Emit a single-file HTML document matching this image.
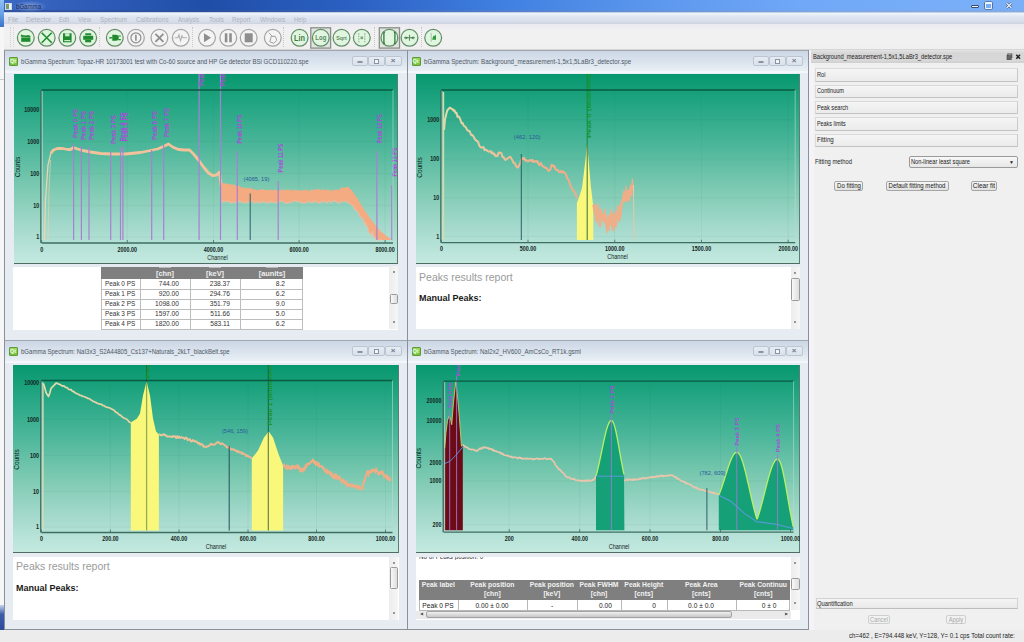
<!DOCTYPE html><html><head><meta charset="utf-8"><style>
html,body{margin:0;padding:0;}
body{width:1024px;height:642px;overflow:hidden;position:relative;background:#efefef;font-family:"Liberation Sans", sans-serif;}
div{box-sizing:border-box;}
</style></head><body><div style="position:absolute;left:0px;top:0px;width:4px;height:27px;background:linear-gradient(#8fc0f2,#6aa2e6 50%,#3a72c8);"></div><div style="position:absolute;left:4px;top:0px;width:1020px;height:13px;background:linear-gradient(to right,#3b68c2 0%,#2c5ab6 10%,#1f4ea8 20%,#2c62c4 35%,#4080e0 49%,#5c98ee 64%,#70a8f8 78%,#78aef8 92%,#7ab0f8 100%);"></div><div style="position:absolute;left:4px;top:10px;width:1020px;height:1.5px;background:linear-gradient(to right,#2e4c94,#30509a 20%,#5a80c8 50%,#80a4dc 80%,#86a8dc);opacity:0.7;"></div><div style="position:absolute;left:4px;top:11.5px;width:1020px;height:1.5px;background:#c2d0e8;"></div><div style="position:absolute;left:14px;top:1px;width:32px;height:11px;background:radial-gradient(ellipse at center,rgba(190,210,245,0.55),rgba(120,150,220,0) 75%);"></div><div style="position:absolute;left:4.5px;top:3px;width:7px;height:7px;background:linear-gradient(to right,#7a9a6a 50%,#eef2ea 50%);border:1px solid #cdd8e8;"></div><div style="position:absolute;left:16px;top:2.1px;font-size:7.5px;line-height:9.0px;color:#1c2a55;white-space:nowrap;transform:scaleX(0.811);transform-origin:left center;">bGamma</div><div style="position:absolute;left:971px;top:5px;width:7.5px;height:2.6px;background:#eef4fa;border:0.6px solid #3a4e70;border-radius:1px;"></div><div style="position:absolute;left:985.3px;top:1.6px;width:6.5px;height:7px;border:1.4px solid #eef4fa;border-top-width:2px;border-radius:1px;box-shadow:0 0 0 0.6px #3a4e70;"></div><svg style="position:absolute;left:1005px;top:2px" width="8" height="7" viewBox="0 0 8 7"><path d="M1.5 1L6.5 6M6.5 1L1.5 6" stroke="#3a4e70" stroke-width="2.4"/><path d="M1.5 1L6.5 6M6.5 1L1.5 6" stroke="#eef4fa" stroke-width="1.2"/></svg><div style="position:absolute;left:4px;top:13px;width:1020px;height:11px;background:linear-gradient(#eef5fc 0%,#dfe6f1 35%,#d7deeb 80%,#cdd2de 100%);"></div><div style="position:absolute;left:8.2px;top:15.0px;font-size:7.5px;line-height:9.0px;color:#aeb2bc;white-space:nowrap;transform:scaleX(0.852);transform-origin:left center;">File</div><div style="position:absolute;left:26px;top:15.0px;font-size:7.5px;line-height:9.0px;color:#aeb2bc;white-space:nowrap;transform:scaleX(0.893);transform-origin:left center;">Detector</div><div style="position:absolute;left:59px;top:15.0px;font-size:7.5px;line-height:9.0px;color:#aeb2bc;white-space:nowrap;transform:scaleX(0.774);transform-origin:left center;">Edit</div><div style="position:absolute;left:78px;top:15.0px;font-size:7.5px;line-height:9.0px;color:#aeb2bc;white-space:nowrap;transform:scaleX(0.806);transform-origin:left center;">View</div><div style="position:absolute;left:100px;top:15.0px;font-size:7.5px;line-height:9.0px;color:#aeb2bc;white-space:nowrap;transform:scaleX(0.841);transform-origin:left center;">Spectrum</div><div style="position:absolute;left:135.5px;top:15.0px;font-size:7.5px;line-height:9.0px;color:#aeb2bc;white-space:nowrap;transform:scaleX(0.821);transform-origin:left center;">Calibrations</div><div style="position:absolute;left:177.8px;top:15.0px;font-size:7.5px;line-height:9.0px;color:#aeb2bc;white-space:nowrap;transform:scaleX(0.759);transform-origin:left center;">Analysis</div><div style="position:absolute;left:208.5px;top:15.0px;font-size:7.5px;line-height:9.0px;color:#aeb2bc;white-space:nowrap;transform:scaleX(0.857);transform-origin:left center;">Tools</div><div style="position:absolute;left:232.3px;top:15.0px;font-size:7.5px;line-height:9.0px;color:#aeb2bc;white-space:nowrap;transform:scaleX(0.817);transform-origin:left center;">Report</div><div style="position:absolute;left:259.5px;top:15.0px;font-size:7.5px;line-height:9.0px;color:#aeb2bc;white-space:nowrap;transform:scaleX(0.838);transform-origin:left center;">Windows</div><div style="position:absolute;left:293.8px;top:15.0px;font-size:7.5px;line-height:9.0px;color:#aeb2bc;white-space:nowrap;transform:scaleX(0.791);transform-origin:left center;">Help</div><div style="position:absolute;left:4px;top:24px;width:1020px;height:25px;background:linear-gradient(#ebeaf0,#f1f0f2 25%,#f1f1f1 70%,#efefef);"></div><div style="position:absolute;left:4px;top:49px;width:1020px;height:1px;background:#d6d6d6;"></div><div style="position:absolute;left:10px;top:27px;width:1px;height:20px;border-left:1px dotted #d0d0d0;"></div><div style="position:absolute;left:12.5px;top:27px;width:1px;height:20px;border-left:1px dotted #d8d8d8;"></div><div style="position:absolute;left:99px;top:27px;width:1px;height:20px;border-left:1px dotted #c8c8c8;"></div><div style="position:absolute;left:192.3px;top:27px;width:1px;height:20px;border-left:1px dotted #c8c8c8;"></div><div style="position:absolute;left:283px;top:27px;width:1px;height:20px;border-left:1px dotted #c8c8c8;"></div><div style="position:absolute;left:374px;top:27px;width:1px;height:20px;border-left:1px dotted #c8c8c8;"></div><div style="position:absolute;left:421px;top:27px;width:1px;height:20px;border-left:1px dotted #c8c8c8;"></div><svg style="position:absolute;left:0;top:0" width="460" height="52" viewBox="0 0 460 52"><defs><radialGradient id="gfill" cx="0.5" cy="0.5" r="0.5"><stop offset="0" stop-color="#e4f7e4"/><stop offset="0.85" stop-color="#def5de"/><stop offset="1" stop-color="#eefaee"/></radialGradient></defs><rect x="310.8" y="27.8" width="19.8" height="20.3" fill="#dfe5df" stroke="#8a8f8a" stroke-width="1.3"/><rect x="379.3" y="27.8" width="20.2" height="20.3" fill="#dfe5df" stroke="#8a8f8a" stroke-width="1.3"/><circle cx="25.8" cy="37.8" r="8.4" fill="url(#gfill)" stroke="#638c66" stroke-width="1.25"/><path d="M21.0 34.599999999999994l2.5 0.6l2.5 0.3l2.2-0.4l2.4 0.9l-0.3 1.3l-9.5-0.6z" fill="#1f8a2e"/><path d="M21.200000000000003 37.4h9.2v4.4h-9.2z" fill="#1f8a2e"/><circle cx="46.7" cy="37.8" r="8.4" fill="url(#gfill)" stroke="#638c66" stroke-width="1.25"/><path d="M41.7 32.8L51.7 42.8M51.7 32.8L41.7 42.8" stroke="#1f8a2e" stroke-width="1.6"/><circle cx="67.3" cy="37.8" r="8.4" fill="url(#gfill)" stroke="#638c66" stroke-width="1.25"/><path d="M63.0 33.3h8.6v9h-8.6z" fill="#1f8a2e"/><rect x="65.1" y="33.3" width="4.4" height="3" fill="#cfeccf"/><rect x="64.3" y="40.0" width="6" height="1.2" fill="#cfeccf"/><circle cx="88.2" cy="37.8" r="8.4" fill="url(#gfill)" stroke="#638c66" stroke-width="1.25"/><rect x="85.2" y="33.3" width="6" height="2" fill="#1f8a2e"/><rect x="83.2" y="35.8" width="10" height="4" fill="#1f8a2e"/><rect x="85.2" y="39.8" width="6" height="2.5" fill="#1f8a2e"/><circle cx="114.8" cy="37.8" r="8.4" fill="url(#gfill)" stroke="#638c66" stroke-width="1.25"/><path d="M109.3 37.8h3" stroke="#1f8a2e" stroke-width="1.4"/><path d="M112.3 34.8h3.5a3 3 0 0 1 0 6h-3.5z" fill="#1f8a2e"/><path d="M118.3 36.0h2.5M118.3 39.599999999999994h2.5" stroke="#1f8a2e" stroke-width="1.2"/><circle cx="135.9" cy="37.8" r="8.4" fill="#f4f4f4" stroke="#a4a4a4" stroke-width="1.25"/><circle cx="135.9" cy="37.8" r="5" fill="none" stroke="#8e8e8e" stroke-width="1.2"/><path d="M135.9 34.8v6" stroke="#8e8e8e" stroke-width="1.6"/><circle cx="159.4" cy="37.8" r="8.4" fill="#f4f4f4" stroke="#a4a4a4" stroke-width="1.25"/><path d="M155.4 33.8L163.4 41.8M163.4 33.8L155.4 41.8" stroke="#8e8e8e" stroke-width="1.8"/><circle cx="180.8" cy="37.8" r="8.4" fill="#f4f4f4" stroke="#a4a4a4" stroke-width="1.25"/><path d="M174.8 37.8h3l1.2-3l1.5 6l1.5-5l1 2h3.8" fill="none" stroke="#b0b0b0" stroke-width="1.1"/><circle cx="207.0" cy="37.8" r="8.4" fill="#f4f4f4" stroke="#a4a4a4" stroke-width="1.25"/><path d="M204.0 33.3L211.0 37.8L204.0 42.3z" fill="#8e8e8e"/><circle cx="228.3" cy="37.8" r="8.4" fill="#f4f4f4" stroke="#a4a4a4" stroke-width="1.25"/><rect x="224.8" y="33.3" width="2.6" height="9" fill="#8e8e8e"/><rect x="229.20000000000002" y="33.3" width="2.6" height="9" fill="#8e8e8e"/><circle cx="248.7" cy="37.8" r="8.4" fill="#f4f4f4" stroke="#a4a4a4" stroke-width="1.25"/><rect x="244.7" y="33.3" width="8" height="9" fill="#8e8e8e"/><circle cx="272.8" cy="37.8" r="8.4" fill="#f4f4f4" stroke="#a4a4a4" stroke-width="1.25"/><path d="M268.8 32.8L272.8 36.8M271.3 36.3l4 0l1.5 4l-3 3l-4-1.5z" fill="none" stroke="#a0a0a0" stroke-width="1"/><circle cx="299.6" cy="37.8" r="8.4" fill="url(#gfill)" stroke="#638c66" stroke-width="1.25"/><text x="299.6" y="41.099999999999994" font-size="9" text-anchor="middle" fill="#437d48" font-family="Liberation Sans" font-weight="bold" textLength="11" lengthAdjust="spacingAndGlyphs">Lin</text><circle cx="320.8" cy="37.8" r="8.4" fill="url(#gfill)" stroke="#638c66" stroke-width="1.25"/><text x="320.8" y="40.4" font-size="8" text-anchor="middle" fill="#5a8a5e" font-family="Liberation Sans" font-weight="bold" textLength="11" lengthAdjust="spacingAndGlyphs">Log</text><circle cx="341.5" cy="37.8" r="8.4" fill="url(#gfill)" stroke="#638c66" stroke-width="1.25"/><text x="341.5" y="40.0" font-size="6" text-anchor="middle" fill="#5a8a5e" font-family="Liberation Sans" font-weight="bold" textLength="10.5" lengthAdjust="spacingAndGlyphs">Sqrt</text><circle cx="361.8" cy="37.8" r="8.4" fill="url(#gfill)" stroke="#638c66" stroke-width="1.25"/><path d="M358.8 33.3v9M364.8 33.3v9" stroke="#90b892" stroke-width="1.2" stroke-dasharray="1.5 1"/><rect x="360.5" y="36.5" width="2.6" height="2.6" fill="#7aa67c"/><circle cx="389.4" cy="37.8" r="8.4" fill="url(#gfill)" stroke="#638c66" stroke-width="1.25"/><path d="M384.9 32.3h-1v11h1M393.9 32.3h1v11h-1" fill="none" stroke="#2f7a3a" stroke-width="1.3"/><circle cx="409.5" cy="37.8" r="8.4" fill="url(#gfill)" stroke="#638c66" stroke-width="1.25"/><path d="M404.0 37.8h11M409.5 34.8v6" stroke="#5a8a5e" stroke-width="1.1"/><path d="M405.5 36.199999999999996l2.6 1.6l-2.6 1.6zM413.5 36.199999999999996l-2.6 1.6l2.6 1.6z" fill="#4a7a4e"/><circle cx="433.2" cy="37.8" r="8.4" fill="url(#gfill)" stroke="#638c66" stroke-width="1.25"/><path d="M431.2 32.8v9" stroke="#9ab89c" stroke-width="0.8"/><path d="M432.2 39.8l0.8-3l1-1.5l0.8 1l1.2-2v5.5z" fill="#2e9a3a"/></svg><div style="position:absolute;left:4px;top:50px;width:805px;height:580px;background:#8a9099;"></div><div style="position:absolute;left:4px;top:50px;width:404px;height:291px;background:#e6ecf2;border:1px solid #8a9099;border-top-color:#a0a6b0;border-radius:2px 2px 0 0;"></div><div style="position:absolute;left:5px;top:51px;width:402px;height:20px;background:linear-gradient(#ccd7e5,#dfe7f0 70%,#eaf0f5);"></div><div style="position:absolute;left:5px;top:71px;width:402px;height:2px;background:#f3f6fa;"></div><div style="position:absolute;left:9.3px;top:56.8px;width:9px;height:9.6px;background:linear-gradient(#9ad860,#78c040);border:1px solid #5f9a38;border-radius:1px;"></div><div style="position:absolute;left:10px;top:58.2px;font-size:5.5px;line-height:6.6px;color:#e8ffe0;white-space:nowrap;font-weight:bold;">Qt</div><div style="position:absolute;left:21px;top:58.4px;font-size:7.3px;line-height:8.8px;color:#4f5966;white-space:nowrap;transform:scaleX(0.835);transform-origin:left center;">bGamma Spectrum: Topaz-HR 10173001 test with Co-60 source and HP Ge detector BSi GCD110220.spe</div><div style="position:absolute;left:351.5px;top:56px;width:16.4px;height:10.2px;background:linear-gradient(#e6ecf3,#d9e1eb);border:1px solid #bcc6d2;border-radius:2px;"></div><div style="position:absolute;left:367.9px;top:56px;width:16.7px;height:10.2px;background:linear-gradient(#e6ecf3,#d9e1eb);border:1px solid #bcc6d2;border-radius:2px;"></div><div style="position:absolute;left:384.59999999999997px;top:56px;width:17.5px;height:10.2px;background:linear-gradient(#e6ecf3,#d9e1eb);border:1px solid #bcc6d2;border-radius:2px;"></div><div style="position:absolute;left:357px;top:61px;width:6px;height:2.2px;background:#f4f6f8;border:1px solid #8a95a2;border-radius:1px;"></div><div style="position:absolute;left:373.5px;top:59px;width:5.5px;height:4.5px;background:#f4f6f8;border:1px solid #8a95a2;border-top-width:1.6px;"></div><div style="position:absolute;left:393.2px;top:56.4px;font-size:8px;line-height:9.6px;color:#6f7a88;white-space:nowrap;font-weight:bold;transform:translateX(-50%) ;transform-origin:center center;">&#215;</div><div style="position:absolute;left:406.5px;top:50px;width:402.5px;height:291px;background:#e6ecf2;border:1px solid #8a9099;border-top-color:#a0a6b0;border-radius:2px 2px 0 0;"></div><div style="position:absolute;left:407.5px;top:51px;width:400.5px;height:20px;background:linear-gradient(#ccd7e5,#dfe7f0 70%,#eaf0f5);"></div><div style="position:absolute;left:407.5px;top:71px;width:400.5px;height:2px;background:#f3f6fa;"></div><div style="position:absolute;left:411.8px;top:56.8px;width:9px;height:9.6px;background:linear-gradient(#9ad860,#78c040);border:1px solid #5f9a38;border-radius:1px;"></div><div style="position:absolute;left:412.5px;top:58.2px;font-size:5.5px;line-height:6.6px;color:#e8ffe0;white-space:nowrap;font-weight:bold;">Qt</div><div style="position:absolute;left:423.5px;top:58.4px;font-size:7.3px;line-height:8.8px;color:#4f5966;white-space:nowrap;transform:scaleX(0.847);transform-origin:left center;">bGamma Spectrum: Background_measurement-1,5x1,5LaBr3_detector.spe</div><div style="position:absolute;left:752.5px;top:56px;width:16.4px;height:10.2px;background:linear-gradient(#e6ecf3,#d9e1eb);border:1px solid #bcc6d2;border-radius:2px;"></div><div style="position:absolute;left:768.9px;top:56px;width:16.7px;height:10.2px;background:linear-gradient(#e6ecf3,#d9e1eb);border:1px solid #bcc6d2;border-radius:2px;"></div><div style="position:absolute;left:785.6px;top:56px;width:17.5px;height:10.2px;background:linear-gradient(#e6ecf3,#d9e1eb);border:1px solid #bcc6d2;border-radius:2px;"></div><div style="position:absolute;left:758.0px;top:61px;width:6px;height:2.2px;background:#f4f6f8;border:1px solid #8a95a2;border-radius:1px;"></div><div style="position:absolute;left:774.5px;top:59px;width:5.5px;height:4.5px;background:#f4f6f8;border:1px solid #8a95a2;border-top-width:1.6px;"></div><div style="position:absolute;left:794.2px;top:56.4px;font-size:8px;line-height:9.6px;color:#6f7a88;white-space:nowrap;font-weight:bold;transform:translateX(-50%) ;transform-origin:center center;">&#215;</div><div style="position:absolute;left:4px;top:340px;width:404px;height:290px;background:#e6ecf2;border:1px solid #8a9099;border-top-color:#a0a6b0;border-radius:2px 2px 0 0;"></div><div style="position:absolute;left:5px;top:341px;width:402px;height:20px;background:linear-gradient(#ccd7e5,#dfe7f0 70%,#eaf0f5);"></div><div style="position:absolute;left:5px;top:361px;width:402px;height:2px;background:#f3f6fa;"></div><div style="position:absolute;left:9.3px;top:346.8px;width:9px;height:9.6px;background:linear-gradient(#9ad860,#78c040);border:1px solid #5f9a38;border-radius:1px;"></div><div style="position:absolute;left:10px;top:348.2px;font-size:5.5px;line-height:6.6px;color:#e8ffe0;white-space:nowrap;font-weight:bold;">Qt</div><div style="position:absolute;left:21px;top:348.4px;font-size:7.3px;line-height:8.8px;color:#4f5966;white-space:nowrap;transform:scaleX(0.827);transform-origin:left center;">bGamma Spectrum: NaI3x3_S2A44805_Cs137+Naturals_2kLT_blackBelt.spe</div><div style="position:absolute;left:351.5px;top:346px;width:16.4px;height:10.2px;background:linear-gradient(#e6ecf3,#d9e1eb);border:1px solid #bcc6d2;border-radius:2px;"></div><div style="position:absolute;left:367.9px;top:346px;width:16.7px;height:10.2px;background:linear-gradient(#e6ecf3,#d9e1eb);border:1px solid #bcc6d2;border-radius:2px;"></div><div style="position:absolute;left:384.59999999999997px;top:346px;width:17.5px;height:10.2px;background:linear-gradient(#e6ecf3,#d9e1eb);border:1px solid #bcc6d2;border-radius:2px;"></div><div style="position:absolute;left:357px;top:351px;width:6px;height:2.2px;background:#f4f6f8;border:1px solid #8a95a2;border-radius:1px;"></div><div style="position:absolute;left:373.5px;top:349px;width:5.5px;height:4.5px;background:#f4f6f8;border:1px solid #8a95a2;border-top-width:1.6px;"></div><div style="position:absolute;left:393.2px;top:346.4px;font-size:8px;line-height:9.6px;color:#6f7a88;white-space:nowrap;font-weight:bold;transform:translateX(-50%) ;transform-origin:center center;">&#215;</div><div style="position:absolute;left:406.5px;top:340px;width:402.5px;height:290px;background:#e6ecf2;border:1px solid #8a9099;border-top-color:#a0a6b0;border-radius:2px 2px 0 0;"></div><div style="position:absolute;left:407.5px;top:341px;width:400.5px;height:20px;background:linear-gradient(#ccd7e5,#dfe7f0 70%,#eaf0f5);"></div><div style="position:absolute;left:407.5px;top:361px;width:400.5px;height:2px;background:#f3f6fa;"></div><div style="position:absolute;left:411.8px;top:346.8px;width:9px;height:9.6px;background:linear-gradient(#9ad860,#78c040);border:1px solid #5f9a38;border-radius:1px;"></div><div style="position:absolute;left:412.5px;top:348.2px;font-size:5.5px;line-height:6.6px;color:#e8ffe0;white-space:nowrap;font-weight:bold;">Qt</div><div style="position:absolute;left:423.5px;top:348.4px;font-size:7.3px;line-height:8.8px;color:#4f5966;white-space:nowrap;transform:scaleX(0.831);transform-origin:left center;">bGamma Spectrum: NaI2x2_HV600_AmCsCo_RT1k.gsml</div><div style="position:absolute;left:752.5px;top:346px;width:16.4px;height:10.2px;background:linear-gradient(#e6ecf3,#d9e1eb);border:1px solid #bcc6d2;border-radius:2px;"></div><div style="position:absolute;left:768.9px;top:346px;width:16.7px;height:10.2px;background:linear-gradient(#e6ecf3,#d9e1eb);border:1px solid #bcc6d2;border-radius:2px;"></div><div style="position:absolute;left:785.6px;top:346px;width:17.5px;height:10.2px;background:linear-gradient(#e6ecf3,#d9e1eb);border:1px solid #bcc6d2;border-radius:2px;"></div><div style="position:absolute;left:758.0px;top:351px;width:6px;height:2.2px;background:#f4f6f8;border:1px solid #8a95a2;border-radius:1px;"></div><div style="position:absolute;left:774.5px;top:349px;width:5.5px;height:4.5px;background:#f4f6f8;border:1px solid #8a95a2;border-top-width:1.6px;"></div><div style="position:absolute;left:794.2px;top:346.4px;font-size:8px;line-height:9.6px;color:#6f7a88;white-space:nowrap;font-weight:bold;transform:translateX(-50%) ;transform-origin:center center;">&#215;</div><div style="position:absolute;left:13.5px;top:74px;width:384.5px;height:190px;background:linear-gradient(#07986f 0%,#0c9a72 3%,#28a886 19%,#50b89c 40%,#7ecab2 61%,#a6dacd 82%,#bee6dc 96%,#c4e9df 100%);border-right:1px solid #5d7d72;border-bottom:1.5px solid #4f6c63;"></div><svg style="position:absolute;left:13.5px;top:74px" width="384.5" height="190" viewBox="13.5 74 384.5 190" font-family="Liberation Sans"><line x1="41" y1="141.3" x2="392.5" y2="141.3" stroke="#1f6a50" stroke-opacity="0.11" stroke-width="0.6"/><line x1="41" y1="173.5" x2="392.5" y2="173.5" stroke="#1f6a50" stroke-opacity="0.11" stroke-width="0.6"/><line x1="41" y1="205.3" x2="392.5" y2="205.3" stroke="#1f6a50" stroke-opacity="0.11" stroke-width="0.6"/><line x1="41" y1="237" x2="392.5" y2="237" stroke="#1f6a50" stroke-opacity="0.11" stroke-width="0.6"/><line x1="126.8" y1="90" x2="126.8" y2="243" stroke="#1f6a50" stroke-opacity="0.11" stroke-width="0.6"/><line x1="213" y1="90" x2="213" y2="243" stroke="#1f6a50" stroke-opacity="0.11" stroke-width="0.6"/><line x1="298.6" y1="90" x2="298.6" y2="243" stroke="#1f6a50" stroke-opacity="0.11" stroke-width="0.6"/><line x1="384.6" y1="90" x2="384.6" y2="243" stroke="#1f6a50" stroke-opacity="0.11" stroke-width="0.6"/><path d="M44.0 240.0 L45.0 200.0 L47.5 165.0 L50.3 153.3" fill="none" stroke="#e9d6ae" stroke-width="1.3" stroke-linejoin="round" /><path d="M47.5 240.0 L48.5 190.0 L50.0 160.0" fill="none" stroke="#e4d2b0" stroke-width="1.0" stroke-linejoin="round" stroke-opacity="0.7"/><path d="M50.3 153.3 L53.0 150.0 L57.0 148.5 L62.0 148.5 L67.0 149.5 L70.0 149.5 L73.0 147.5 L77.0 149.0 L82.0 150.5 L90.0 152.0 L100.0 153.5 L110.0 154.0 L125.0 154.0 L140.0 152.5 L150.0 150.5 L157.0 149.0 L163.0 146.5 L168.0 144.0 L172.0 147.0 L178.0 149.5 L184.0 150.0 L189.0 150.0 L193.0 154.0 L198.0 160.0 L203.0 167.0 L208.0 173.0 L212.0 175.5 L216.0 175.0 L219.0 172.0 L220.5 186.0" fill="none" stroke="#f3c29a" stroke-width="2.8" stroke-linejoin="round" /><path d="M220.5 184.0 L221.0 182.6 L222.2 182.5 L223.4 183.8 L224.6 182.9 L225.8 184.0 L227.0 183.9 L228.2 183.6 L229.4 184.7 L230.6 184.0 L231.8 185.0 L233.0 184.5 L234.2 184.8 L235.4 185.7 L236.6 186.8 L237.8 185.6 L239.0 186.0 L240.2 187.1 L241.4 188.0 L242.6 187.5 L243.8 187.4 L245.0 188.8 L246.2 187.1 L247.4 189.0 L248.6 188.1 L249.8 188.0 L251.0 188.2 L252.2 188.9 L253.4 190.1 L254.6 189.1 L255.8 190.1 L257.0 190.3 L258.2 189.7 L259.4 190.1 L260.6 189.1 L261.8 189.1 L263.0 189.4 L264.2 190.4 L265.4 189.9 L266.6 189.6 L267.8 190.2 L269.0 189.9 L270.2 189.6 L271.4 190.6 L272.6 190.4 L273.8 189.5 L275.0 190.1 L276.2 190.1 L277.4 190.8 L278.6 190.5 L279.8 189.6 L281.0 191.0 L282.2 189.2 L283.4 189.8 L284.6 190.5 L285.8 189.3 L287.0 190.0 L288.2 189.1 L289.4 190.3 L290.6 190.5 L291.8 190.1 L293.0 190.8 L294.2 189.6 L295.4 190.4 L296.6 190.2 L297.8 190.2 L299.0 189.9 L300.2 190.7 L301.4 190.9 L302.6 189.9 L303.8 190.3 L305.0 189.1 L306.2 190.4 L307.4 190.3 L308.6 191.0 L309.8 190.6 L311.0 189.6 L312.2 189.8 L313.4 190.3 L314.6 189.0 L315.8 189.9 L317.0 189.3 L318.2 189.2 L319.4 189.1 L320.6 190.5 L321.8 189.3 L323.0 189.5 L324.2 189.8 L325.4 190.7 L326.6 189.2 L327.8 189.9 L329.0 190.1 L330.2 190.8 L331.4 190.6 L332.6 190.7 L333.8 189.6 L335.0 189.8 L336.2 189.4 L337.4 190.2 L338.6 190.0 L339.8 188.1 L341.0 187.9 L342.2 187.7 L343.4 187.4 L344.6 187.6 L345.8 187.5 L347.0 186.5 L347.0 186.5 L351.0 190.0 L356.0 197.0 L362.0 207.0 L368.0 216.0 L374.0 224.0 L380.0 231.0 L386.0 236.0 L390.0 239.0 L392.0 240.0 L382.0 240.0 L381.0 240.0 L380.0 240.0 L379.0 240.0 L378.0 240.0 L377.0 240.0 L376.0 240.0 L375.0 238.2 L374.0 237.6 L373.0 236.7 L372.0 231.1 L371.0 235.7 L370.0 233.6 L369.0 232.9 L368.0 231.1 L367.0 226.9 L366.0 225.7 L365.0 222.3 L364.0 224.7 L363.0 219.4 L362.0 218.2 L361.0 217.9 L360.0 216.2 L359.0 216.2 L358.0 212.9 L357.0 211.2 L356.0 211.0 L355.0 209.3 L354.0 209.8 L353.0 206.2 L348.0 202.9 L346.8 202.3 L345.6 201.2 L344.4 201.4 L343.2 201.6 L342.0 201.7 L340.8 201.1 L339.6 202.8 L338.4 203.2 L337.2 201.9 L336.0 202.0 L334.8 201.0 L333.6 201.0 L332.4 201.6 L331.2 201.4 L330.0 202.8 L328.8 201.2 L327.6 200.9 L326.4 203.1 L325.2 202.1 L324.0 201.2 L322.8 202.1 L321.6 200.9 L320.4 202.1 L319.2 203.1 L318.0 202.9 L316.8 202.5 L315.6 201.4 L314.4 201.7 L313.2 201.2 L312.0 202.7 L310.8 202.1 L309.6 202.7 L308.4 201.6 L307.2 201.3 L306.0 202.7 L304.8 203.2 L303.6 202.8 L302.4 202.7 L301.2 202.8 L300.0 202.6 L298.8 201.3 L297.6 202.0 L296.4 201.7 L295.2 200.9 L294.0 200.9 L292.8 201.5 L291.6 201.4 L290.4 202.5 L289.2 203.1 L288.0 201.9 L286.8 203.0 L285.6 203.2 L284.4 203.1 L283.2 201.7 L282.0 201.3 L280.8 201.3 L279.6 201.3 L278.4 201.3 L277.2 202.3 L276.0 203.0 L274.8 202.8 L273.6 202.0 L272.4 202.4 L271.2 202.7 L270.0 201.0 L268.8 202.4 L267.6 203.0 L266.4 202.7 L265.2 202.6 L264.0 201.9 L262.8 201.2 L261.6 202.7 L260.4 201.6 L259.2 202.7 L258.0 203.1 L256.8 201.8 L255.6 201.8 L254.4 203.1 L253.2 202.5 L252.0 201.2 L250.8 201.1 L249.6 201.2 L248.4 203.0 L247.2 202.7 L246.0 201.2 L244.8 202.8 L243.6 203.2 L242.4 202.4 L241.2 201.6 L240.0 202.1 L238.8 201.1 L237.6 200.8 L236.4 203.1 L235.2 202.4 L234.0 202.1 L232.8 203.0 L231.6 201.8 L230.4 202.9 L229.2 202.8 L228.0 201.3 L226.8 201.4 L225.6 201.5 L224.4 201.4 L223.2 202.2 L222.0 201.4 L221.0 200.0Z" fill="#f5ab82" /><path d="M381.0 240.0 L380.0 240.0 L379.0 240.0 L378.0 240.0 L377.0 240.0 L376.0 240.0 L375.0 238.2 L374.0 237.6 L373.0 236.7 L372.0 231.1 L371.0 235.7 L370.0 233.6 L369.0 232.9 L368.0 231.1 L367.0 226.9 L366.0 225.7 L365.0 222.3 L364.0 224.7 L363.0 219.4 L362.0 218.2 L361.0 217.9 L360.0 216.2 L359.0 216.2 L358.0 212.9 L357.0 211.2 L356.0 211.0 L355.0 209.3 L354.0 209.8 L353.0 206.2 L348.0 202.9 L346.8 202.3 L345.6 201.2 L344.4 201.4 L343.2 201.6 L342.0 201.7 L340.8 201.1 L339.6 202.8 L338.4 203.2 L337.2 201.9 L336.0 202.0 L334.8 201.0 L333.6 201.0 L332.4 201.6 L331.2 201.4 L330.0 202.8 L328.8 201.2 L327.6 200.9 L326.4 203.1 L325.2 202.1 L324.0 201.2 L322.8 202.1 L321.6 200.9 L320.4 202.1 L319.2 203.1 L318.0 202.9 L316.8 202.5 L315.6 201.4 L314.4 201.7 L313.2 201.2 L312.0 202.7 L310.8 202.1 L309.6 202.7 L308.4 201.6 L307.2 201.3 L306.0 202.7 L304.8 203.2 L303.6 202.8 L302.4 202.7 L301.2 202.8 L300.0 202.6 L298.8 201.3 L297.6 202.0 L296.4 201.7 L295.2 200.9 L294.0 200.9 L292.8 201.5 L291.6 201.4 L290.4 202.5 L289.2 203.1 L288.0 201.9 L286.8 203.0 L285.6 203.2 L284.4 203.1 L283.2 201.7 L282.0 201.3 L280.8 201.3 L279.6 201.3 L278.4 201.3 L277.2 202.3 L276.0 203.0 L274.8 202.8 L273.6 202.0 L272.4 202.4 L271.2 202.7 L270.0 201.0 L268.8 202.4 L267.6 203.0 L266.4 202.7 L265.2 202.6 L264.0 201.9 L262.8 201.2 L261.6 202.7 L260.4 201.6 L259.2 202.7 L258.0 203.1 L256.8 201.8 L255.6 201.8 L254.4 203.1 L253.2 202.5 L252.0 201.2 L250.8 201.1 L249.6 201.2 L248.4 203.0 L247.2 202.7 L246.0 201.2 L244.8 202.8 L243.6 203.2 L242.4 202.4 L241.2 201.6 L240.0 202.1 L238.8 201.1 L237.6 200.8 L236.4 203.1 L235.2 202.4 L234.0 202.1 L232.8 203.0 L231.6 201.8 L230.4 202.9 L229.2 202.8 L228.0 201.3 L226.8 201.4 L225.6 201.5 L224.4 201.4 L223.2 202.2 L222.0 201.4 L221.0 200.0" fill="none" stroke="#f0c0a4" stroke-width="1.4" stroke-linejoin="round" stroke-opacity="0.55"/><line x1="73.1" y1="144" x2="73.1" y2="240" stroke="#a880d2" stroke-width="1.2"/><line x1="80.9" y1="146" x2="80.9" y2="240" stroke="#a880d2" stroke-width="1.2"/><line x1="88.5" y1="147" x2="88.5" y2="240" stroke="#a880d2" stroke-width="1.2"/><line x1="110.2" y1="152" x2="110.2" y2="240" stroke="#a880d2" stroke-width="1.2"/><line x1="120" y1="147" x2="120" y2="240" stroke="#a880d2" stroke-width="1.2"/><line x1="122.4" y1="147" x2="122.4" y2="240" stroke="#a880d2" stroke-width="1.2"/><line x1="151.2" y1="150" x2="151.2" y2="240" stroke="#a880d2" stroke-width="1.2"/><line x1="163.2" y1="145" x2="163.2" y2="240" stroke="#a880d2" stroke-width="1.2"/><line x1="198.6" y1="74" x2="198.6" y2="240" stroke="#a880d2" stroke-width="1.2"/><line x1="220" y1="74" x2="220" y2="240" stroke="#a880d2" stroke-width="1.2"/><line x1="236.8" y1="151" x2="236.8" y2="240" stroke="#a880d2" stroke-width="1.2"/><line x1="277.7" y1="181" x2="277.7" y2="240" stroke="#a880d2" stroke-width="1.2"/><line x1="376.4" y1="151" x2="376.4" y2="240" stroke="#a880d2" stroke-width="1.2"/><line x1="391.3" y1="185" x2="391.3" y2="240" stroke="#a880d2" stroke-width="1.2"/><text x="0" y="0" transform="translate(77.89999999999999 123.5) rotate(-90)" font-size="6.6" font-weight="bold" text-anchor="middle" fill="#a84ddc" textLength="29" lengthAdjust="spacingAndGlyphs">Peak 0 PS</text><text x="0" y="0" transform="translate(85.7 125.5) rotate(-90)" font-size="6.6" font-weight="bold" text-anchor="middle" fill="#a84ddc" textLength="29" lengthAdjust="spacingAndGlyphs">Peak 1 PS</text><text x="0" y="0" transform="translate(93.3 125.5) rotate(-90)" font-size="6.6" font-weight="bold" text-anchor="middle" fill="#a84ddc" textLength="29" lengthAdjust="spacingAndGlyphs">Peak 2 PS</text><text x="0" y="0" transform="translate(115.0 129.6) rotate(-90)" font-size="6.6" font-weight="bold" text-anchor="middle" fill="#a84ddc" textLength="29" lengthAdjust="spacingAndGlyphs">Peak 3 PS</text><text x="0" y="0" transform="translate(124.8 127) rotate(-90)" font-size="6.6" font-weight="bold" text-anchor="middle" fill="#a84ddc" textLength="29" lengthAdjust="spacingAndGlyphs">Peak 4 PS</text><text x="0" y="0" transform="translate(127.2 127) rotate(-90)" font-size="6.6" font-weight="bold" text-anchor="middle" fill="#a84ddc" textLength="29" lengthAdjust="spacingAndGlyphs">Peak 5 PS</text><text x="0" y="0" transform="translate(156.0 125.5) rotate(-90)" font-size="6.6" font-weight="bold" text-anchor="middle" fill="#a84ddc" textLength="29" lengthAdjust="spacingAndGlyphs">Peak 6 PS</text><text x="0" y="0" transform="translate(168.0 122.5) rotate(-90)" font-size="6.6" font-weight="bold" text-anchor="middle" fill="#a84ddc" textLength="29" lengthAdjust="spacingAndGlyphs">Peak 7 PS</text><text x="0" y="0" transform="translate(241.60000000000002 129) rotate(-90)" font-size="6.6" font-weight="bold" text-anchor="middle" fill="#a84ddc" textLength="29" lengthAdjust="spacingAndGlyphs">Peak 10 PS</text><text x="0" y="0" transform="translate(282.5 158) rotate(-90)" font-size="6.6" font-weight="bold" text-anchor="middle" fill="#a84ddc" textLength="29" lengthAdjust="spacingAndGlyphs">Peak 11 PS</text><text x="0" y="0" transform="translate(381.2 128.5) rotate(-90)" font-size="6.6" font-weight="bold" text-anchor="middle" fill="#a84ddc" textLength="29" lengthAdjust="spacingAndGlyphs">Peak 12 PS</text><text x="0" y="0" transform="translate(396.1 162) rotate(-90)" font-size="6.6" font-weight="bold" text-anchor="middle" fill="#a84ddc" textLength="29" lengthAdjust="spacingAndGlyphs">Peak 13 PS</text><text x="0" y="0" transform="translate(203.4 86) rotate(-90)" font-size="6.6" font-weight="bold" text-anchor="start" fill="#a84ddc" textLength="29" lengthAdjust="spacingAndGlyphs">Peak 8 PS</text><text x="0" y="0" transform="translate(224.8 86.5) rotate(-90)" font-size="6.6" font-weight="bold" text-anchor="start" fill="#a84ddc" textLength="29" lengthAdjust="spacingAndGlyphs">Peak 9 PS</text><line x1="249.7" y1="193.4" x2="249.7" y2="240" stroke="#2a5f6a" stroke-width="1"/><text x="255.9" y="181" font-size="6.2" text-anchor="middle" fill="#2a5a9a" textLength="25.8" lengthAdjust="spacingAndGlyphs">(4065, 19)</text><line x1="41" y1="90" x2="392.5" y2="90" stroke="#0a5a40" stroke-width="1.3"/><line x1="392.5" y1="90" x2="392.5" y2="243" stroke="#b8dccd" stroke-opacity="0.6" stroke-width="1"/><line x1="40.4" y1="90" x2="40.4" y2="243" stroke="#3f6d60" stroke-width="1.4"/><line x1="41.8" y1="91" x2="41.8" y2="243" stroke="#cfe6dc" stroke-opacity="0.55" stroke-width="1.2"/><line x1="41" y1="243" x2="392.5" y2="243" stroke="#3f6d60" stroke-width="1.3"/><text x="38.7" y="112.3" font-size="6.4" font-weight="bold" text-anchor="end" fill="#13261f" textLength="14.9" lengthAdjust="spacingAndGlyphs">10000</text><text x="38.7" y="143.60000000000002" font-size="6.4" font-weight="bold" text-anchor="end" fill="#13261f" textLength="12.0" lengthAdjust="spacingAndGlyphs">1000</text><text x="38.7" y="175.8" font-size="6.4" font-weight="bold" text-anchor="end" fill="#13261f" textLength="9.0" lengthAdjust="spacingAndGlyphs">100</text><text x="38.7" y="207.60000000000002" font-size="6.4" font-weight="bold" text-anchor="end" fill="#13261f" textLength="6.0" lengthAdjust="spacingAndGlyphs">10</text><text x="38.7" y="239.3" font-size="6.4" font-weight="bold" text-anchor="end" fill="#13261f" textLength="3.0" lengthAdjust="spacingAndGlyphs">1</text><line x1="41.2" y1="243" x2="41.2" y2="240" stroke="#3f6d60" stroke-width="0.8"/><text x="41.2" y="251.6" font-size="6.4" font-weight="bold" text-anchor="middle" fill="#13261f" textLength="3.0" lengthAdjust="spacingAndGlyphs">0</text><line x1="126.8" y1="243" x2="126.8" y2="240" stroke="#3f6d60" stroke-width="0.8"/><text x="126.8" y="251.6" font-size="6.4" font-weight="bold" text-anchor="middle" fill="#13261f" textLength="19.4" lengthAdjust="spacingAndGlyphs">2000.00</text><line x1="213" y1="243" x2="213" y2="240" stroke="#3f6d60" stroke-width="0.8"/><text x="213" y="251.6" font-size="6.4" font-weight="bold" text-anchor="middle" fill="#13261f" textLength="19.4" lengthAdjust="spacingAndGlyphs">4000.00</text><line x1="298.6" y1="243" x2="298.6" y2="240" stroke="#3f6d60" stroke-width="0.8"/><text x="298.6" y="251.6" font-size="6.4" font-weight="bold" text-anchor="middle" fill="#13261f" textLength="19.4" lengthAdjust="spacingAndGlyphs">6000.00</text><line x1="384.6" y1="243" x2="384.6" y2="240" stroke="#3f6d60" stroke-width="0.8"/><text x="384.6" y="251.6" font-size="6.4" font-weight="bold" text-anchor="middle" fill="#13261f" textLength="19.4" lengthAdjust="spacingAndGlyphs">8000.00</text><text x="217" y="259.6" font-size="6.4" text-anchor="middle" fill="#13261f" textLength="20.5" lengthAdjust="spacingAndGlyphs">Channel</text><text x="0" y="0" transform="translate(19 167) rotate(-90)" font-size="6.4" text-anchor="middle" fill="#13261f" textLength="20.5" lengthAdjust="spacingAndGlyphs">Counts</text></svg><div style="position:absolute;left:415.5px;top:74px;width:384.5px;height:190px;background:linear-gradient(#07986f 0%,#0c9a72 3%,#28a886 19%,#50b89c 40%,#7ecab2 61%,#a6dacd 82%,#bee6dc 96%,#c4e9df 100%);border-right:1px solid #5d7d72;border-bottom:1.5px solid #4f6c63;"></div><svg style="position:absolute;left:415.5px;top:74px" width="384.5" height="190" viewBox="415.5 74 384.5 190" font-family="Liberation Sans"><line x1="441" y1="119.7" x2="794.7" y2="119.7" stroke="#1f6a50" stroke-opacity="0.11" stroke-width="0.6"/><line x1="441" y1="158.9" x2="794.7" y2="158.9" stroke="#1f6a50" stroke-opacity="0.11" stroke-width="0.6"/><line x1="441" y1="197.8" x2="794.7" y2="197.8" stroke="#1f6a50" stroke-opacity="0.11" stroke-width="0.6"/><line x1="441" y1="236.4" x2="794.7" y2="236.4" stroke="#1f6a50" stroke-opacity="0.11" stroke-width="0.6"/><line x1="527.5" y1="90" x2="527.5" y2="242.7" stroke="#1f6a50" stroke-opacity="0.11" stroke-width="0.6"/><line x1="614.3" y1="90" x2="614.3" y2="242.7" stroke="#1f6a50" stroke-opacity="0.11" stroke-width="0.6"/><line x1="701" y1="90" x2="701" y2="242.7" stroke="#1f6a50" stroke-opacity="0.11" stroke-width="0.6"/><line x1="787.7" y1="90" x2="787.7" y2="242.7" stroke="#1f6a50" stroke-opacity="0.11" stroke-width="0.6"/><line x1="443" y1="92" x2="443" y2="240" stroke="#d2dca8" stroke-width="1.4"/><defs><linearGradient id="trg" gradientUnits="userSpaceOnUse" x1="443" y1="0" x2="600" y2="0"><stop offset="0" stop-color="#e4d8a8"/><stop offset="0.3" stop-color="#ecc49c"/><stop offset="0.6" stop-color="#f0b08c"/><stop offset="1" stop-color="#f2a888"/></linearGradient></defs><path d="M443.5 130.0 L444.5 119.7 L445.8 114.0 L447.0 110.0 L448.0 109.0 L449.0 107.8 L450.0 107.8 L451.0 108.9 L452.0 109.0 L453.0 110.7 L454.0 110.3 L455.0 113.0 L456.0 112.8 L457.0 116.9 L458.0 116.4 L459.0 117.7 L460.0 120.0 L461.1 123.2 L462.2 123.1 L463.3 125.8 L464.4 126.3 L465.6 127.8 L466.8 129.9 L468.0 131.0 L469.0 130.9 L470.0 133.4 L471.0 135.2 L472.0 135.0 L473.1 136.6 L474.1 138.8 L475.2 140.0 L476.3 141.0 L477.5 141.6 L478.8 145.8 L480.0 147.0 L481.0 147.8 L482.0 147.4 L483.0 147.0 L484.0 150.2 L485.0 149.4 L486.0 150.0 L487.0 151.0 L488.0 151.7 L489.0 151.4 L490.0 151.0 L491.0 153.1 L492.0 152.2 L493.0 154.2 L494.0 153.8 L495.0 156.1 L496.0 155.5 L497.0 156.1 L498.0 153.0 L499.0 152.5 L500.0 153.0 L501.0 153.5 L502.0 157.3 L503.0 157.0 L504.0 159.0 L505.0 160.0 L506.0 158.8 L507.0 158.8 L508.0 157.8 L509.0 157.1 L510.0 157.0 L511.0 158.8 L512.0 160.3 L513.0 162.8 L514.0 163.0 L515.1 165.0 L516.3 167.3 L517.4 167.4 L518.7 165.4 L520.0 162.7 L521.3 158.0 L522.5 159.0 L523.6 157.9 L524.8 160.7 L526.0 160.0 L527.0 161.5 L528.0 161.3 L529.0 160.2 L530.0 160.0 L531.0 161.0 L532.0 159.7 L533.0 162.1 L534.0 161.6 L535.0 161.0 L536.0 162.0 L537.0 161.1 L538.1 164.2 L539.1 165.2 L540.2 162.8 L541.2 164.7 L542.5 166.8 L543.7 166.6 L545.0 168.0 L546.0 167.9 L547.0 169.3 L548.0 171.0 L549.0 170.4 L550.0 169.2 L551.0 165.0 L552.0 165.0 L553.0 166.6 L554.0 166.0 L555.0 169.4 L556.0 170.0 L557.1 169.7 L558.1 171.7 L559.2 172.2 L560.3 170.9 L561.3 172.7 L562.4 171.3 L563.6 172.3 L564.8 173.1 L566.0 176.0 L567.0 178.8 L568.0 179.5 L569.0 182.5 L570.0 186.0 L571.0 187.4 L572.0 189.8 L573.0 191.2 L574.0 191.7 L575.0 193.0 L576.0 197.3 L577.0 197.8" fill="none" stroke="url(#trg)" stroke-width="2.0" stroke-linejoin="round" /><path d="M576.4 240.0 L576.4 203.0 L579.0 196.0 L581.5 188.0 L583.5 172.0 L586.7 144.3 L588.8 168.0 L590.3 186.0 L591.8 198.0 L592.8 208.0 L592.8 240.0Z" fill="#f9f87a" /><path d="M592.8 205.0 L593.4 209.2 L594.0 213.4 L594.6 215.9 L595.2 220.8 L595.8 217.2 L596.4 222.9 L597.0 214.0 L597.6 203.3 L598.2 214.4 L598.9 226.5 L599.5 220.1 L600.1 226.7 L600.8 208.5 L601.4 217.6 L602.0 219.0 L602.6 213.4 L603.2 221.1 L603.8 222.3 L604.4 209.3 L605.0 214.7 L605.6 216.7 L606.2 232.5 L606.8 229.4 L607.4 215.3 L608.0 224.0 L608.6 230.6 L609.2 214.3 L609.8 225.3 L610.4 213.0 L611.0 209.5 L611.6 229.9 L612.2 213.5 L612.8 213.2 L613.4 231.1 L614.0 219.0 L614.6 226.8 L615.2 211.7 L615.8 226.8 L616.4 215.5 L617.0 217.8 L617.6 205.3 L618.2 221.9 L618.8 214.8 L619.4 220.3 L620.0 208.0 L620.6 216.3 L621.2 201.0 L621.8 201.4 L622.4 195.6 L623.0 194.0 L623.6 191.0 L624.2 195.5 L624.8 201.7 L625.4 186.2 L626.0 197.0 L626.6 200.5 L627.3 191.5 L628.0 190.0 L628.6 201.4 L629.2 192.5 L629.9 187.8 L630.5 190.9 L631.2 195.5 L631.9 179.2 L632.5 189.0" fill="none" stroke="#f0ae88" stroke-width="1.3" stroke-linejoin="round" /><path d="M592.8 205.0 L593.6 206.2 L594.5 206.6 L595.3 204.6 L596.2 218.1 L597.0 214.0 L597.8 206.9 L598.7 215.7 L599.5 222.9 L600.3 210.6 L601.2 219.0 L602.0 219.0 L602.9 221.6 L603.7 213.1 L604.6 219.2 L605.4 225.1 L606.3 221.8 L607.1 226.9 L608.0 224.0 L608.9 217.8 L609.7 218.4 L610.6 215.6 L611.4 221.2 L612.3 227.2 L613.1 221.2 L614.0 219.0 L614.9 221.8 L615.7 214.0 L616.6 218.2 L617.4 206.3 L618.3 207.8 L619.1 212.4 L620.0 208.0 L620.9 210.0 L621.7 203.6 L622.6 196.7 L623.4 198.0 L624.3 195.5 L625.1 195.1 L626.0 197.0 L626.8 201.0 L627.6 190.2 L628.4 200.2 L629.2 199.1 L630.1 184.9 L630.9 189.1 L631.7 189.9 L632.5 189.0" fill="none" stroke="#f0ae88" stroke-width="1.5" stroke-linejoin="round" /><path d="M592.8 205.0 L594.9 210.9 L597.0 214.0 L598.7 217.9 L600.3 217.5 L602.0 219.0 L603.5 220.3 L605.0 220.6 L606.5 226.7 L608.0 224.0 L609.5 221.1 L611.0 218.7 L612.5 218.3 L614.0 219.0 L615.5 214.3 L617.0 212.1 L618.5 208.9 L620.0 208.0 L621.5 202.1 L623.0 201.1 L624.5 198.2 L626.0 197.0 L627.6 195.6 L629.2 190.6 L630.9 187.6 L632.5 189.0" fill="none" stroke="#f0ae88" stroke-width="2.5" stroke-linejoin="round" /><path d="M633.0 185.0 L633.5 240.0" fill="none" stroke="#e8c8a8" stroke-width="1.0" stroke-linejoin="round" /><line x1="586.7" y1="74" x2="586.7" y2="146" stroke="#158a3a" stroke-width="1"/><line x1="586.7" y1="146" x2="586.7" y2="240" stroke="#4a7a40" stroke-width="1.1"/><text x="0" y="0" transform="translate(590.3000000000001 106) rotate(-90)" font-size="5.6" font-weight="bold" text-anchor="middle" fill="#14952e" textLength="64" lengthAdjust="spacingAndGlyphs">Peak 0 (Multiplet)</text><line x1="520.8" y1="154" x2="520.8" y2="240" stroke="#2a5f6a" stroke-width="1"/><text x="526.6" y="139.2" font-size="6.2" text-anchor="middle" fill="#2a5a9a" textLength="26.5" lengthAdjust="spacingAndGlyphs">(462, 120)</text><line x1="441" y1="90" x2="794.7" y2="90" stroke="#0a5a40" stroke-width="1.3"/><line x1="794.7" y1="90" x2="794.7" y2="242.7" stroke="#b8dccd" stroke-opacity="0.6" stroke-width="1"/><line x1="440.4" y1="90" x2="440.4" y2="242.7" stroke="#3f6d60" stroke-width="1.4"/><line x1="441.8" y1="91" x2="441.8" y2="242.7" stroke="#cfe6dc" stroke-opacity="0.55" stroke-width="1.2"/><line x1="441" y1="242.7" x2="794.7" y2="242.7" stroke="#3f6d60" stroke-width="1.3"/><text x="438.7" y="122.0" font-size="6.4" font-weight="bold" text-anchor="end" fill="#13261f" textLength="12.0" lengthAdjust="spacingAndGlyphs">1000</text><text x="438.7" y="161.20000000000002" font-size="6.4" font-weight="bold" text-anchor="end" fill="#13261f" textLength="9.0" lengthAdjust="spacingAndGlyphs">100</text><text x="438.7" y="200.10000000000002" font-size="6.4" font-weight="bold" text-anchor="end" fill="#13261f" textLength="6.0" lengthAdjust="spacingAndGlyphs">10</text><text x="438.7" y="238.70000000000002" font-size="6.4" font-weight="bold" text-anchor="end" fill="#13261f" textLength="3.0" lengthAdjust="spacingAndGlyphs">1</text><line x1="441" y1="242.7" x2="441" y2="239.7" stroke="#3f6d60" stroke-width="0.8"/><text x="441" y="251.29999999999998" font-size="6.4" font-weight="bold" text-anchor="middle" fill="#13261f" textLength="3.0" lengthAdjust="spacingAndGlyphs">0</text><line x1="527.5" y1="242.7" x2="527.5" y2="239.7" stroke="#3f6d60" stroke-width="0.8"/><text x="527.5" y="251.29999999999998" font-size="6.4" font-weight="bold" text-anchor="middle" fill="#13261f" textLength="16.4" lengthAdjust="spacingAndGlyphs">500.00</text><line x1="614.3" y1="242.7" x2="614.3" y2="239.7" stroke="#3f6d60" stroke-width="0.8"/><text x="614.3" y="251.29999999999998" font-size="6.4" font-weight="bold" text-anchor="middle" fill="#13261f" textLength="19.4" lengthAdjust="spacingAndGlyphs">1000.00</text><line x1="701" y1="242.7" x2="701" y2="239.7" stroke="#3f6d60" stroke-width="0.8"/><text x="701" y="251.29999999999998" font-size="6.4" font-weight="bold" text-anchor="middle" fill="#13261f" textLength="19.4" lengthAdjust="spacingAndGlyphs">1500.00</text><line x1="787.7" y1="242.7" x2="787.7" y2="239.7" stroke="#3f6d60" stroke-width="0.8"/><text x="787.7" y="251.29999999999998" font-size="6.4" font-weight="bold" text-anchor="middle" fill="#13261f" textLength="19.4" lengthAdjust="spacingAndGlyphs">2000.00</text><text x="617" y="259.3" font-size="6.4" text-anchor="middle" fill="#13261f" textLength="20.5" lengthAdjust="spacingAndGlyphs">Channel</text><text x="0" y="0" transform="translate(421 167.5) rotate(-90)" font-size="6.4" text-anchor="middle" fill="#13261f" textLength="20.5" lengthAdjust="spacingAndGlyphs">Counts</text></svg><div style="position:absolute;left:13px;top:364.5px;width:385.5px;height:188.5px;background:linear-gradient(#07986f 0%,#0c9a72 3%,#28a886 19%,#50b89c 40%,#7ecab2 61%,#a6dacd 82%,#bee6dc 96%,#c4e9df 100%);border-right:1px solid #5d7d72;border-bottom:1.5px solid #4f6c63;"></div><svg style="position:absolute;left:13px;top:364.5px" width="385.5" height="188.5" viewBox="13 364.5 385.5 188.5" font-family="Liberation Sans"><line x1="41.4" y1="418.7" x2="392.5" y2="418.7" stroke="#1f6a50" stroke-opacity="0.11" stroke-width="0.6"/><line x1="41.4" y1="455" x2="392.5" y2="455" stroke="#1f6a50" stroke-opacity="0.11" stroke-width="0.6"/><line x1="41.4" y1="490.9" x2="392.5" y2="490.9" stroke="#1f6a50" stroke-opacity="0.11" stroke-width="0.6"/><line x1="41.4" y1="526.5" x2="392.5" y2="526.5" stroke="#1f6a50" stroke-opacity="0.11" stroke-width="0.6"/><line x1="110.4" y1="380" x2="110.4" y2="532" stroke="#1f6a50" stroke-opacity="0.11" stroke-width="0.6"/><line x1="179" y1="380" x2="179" y2="532" stroke="#1f6a50" stroke-opacity="0.11" stroke-width="0.6"/><line x1="248" y1="380" x2="248" y2="532" stroke="#1f6a50" stroke-opacity="0.11" stroke-width="0.6"/><line x1="316.5" y1="380" x2="316.5" y2="532" stroke="#1f6a50" stroke-opacity="0.11" stroke-width="0.6"/><line x1="385.5" y1="380" x2="385.5" y2="532" stroke="#1f6a50" stroke-opacity="0.11" stroke-width="0.6"/><line x1="43" y1="382" x2="43" y2="530" stroke="#d4dcae" stroke-width="1.3"/><defs><linearGradient id="blg" gradientUnits="userSpaceOnUse" x1="43" y1="0" x2="400" y2="0"><stop offset="0" stop-color="#e2dcae"/><stop offset="0.25" stop-color="#e8cfa2"/><stop offset="0.5" stop-color="#eeb890"/><stop offset="1" stop-color="#f0aa86"/></linearGradient></defs><path d="M43.5 383.0 L44.8 387.4 L46.0 392.0 L47.2 394.1 L48.5 396.0 L49.8 392.5 L51.0 388.0 L52.2 386.6 L53.5 385.4 L54.7 384.1 L55.9 382.7 L57.3 382.8 L58.6 383.6 L60.0 384.0 L61.2 384.8 L62.4 385.6 L63.6 385.3 L64.8 386.2 L66.0 387.0 L67.3 387.2 L68.5 388.7 L69.8 389.2 L71.1 389.1 L72.3 390.8 L73.6 390.9 L74.9 392.3 L76.2 392.7 L77.4 393.5 L78.7 393.8 L80.0 395.0 L81.3 394.9 L82.7 396.0 L84.0 396.0 L85.3 396.6 L86.7 397.2 L88.0 398.0 L89.2 398.1 L90.5 399.2 L91.8 399.8 L93.0 400.9 L94.2 401.1 L95.5 401.9 L96.8 402.4 L98.0 403.0 L99.2 403.6 L100.4 403.7 L101.6 403.9 L102.8 405.2 L104.0 405.0 L105.3 406.2 L106.6 406.6 L107.8 407.0 L109.1 407.2 L110.4 407.7 L111.7 408.6 L113.0 409.2 L114.2 409.8 L115.5 411.6 L116.7 412.0 L118.0 413.0 L119.4 414.4 L120.8 414.9 L122.2 416.5 L123.6 417.4 L125.0 418.0 L126.5 418.5 L127.9 419.8 L129.4 421.6 L130.8 422.2" fill="none" stroke="url(#blg)" stroke-width="1.7" stroke-linejoin="round" /><path d="M130.8 530.0 L130.8 422.0 L137.0 418.0 L140.0 413.0 L143.0 395.0 L146.6 380.8 L150.0 395.0 L153.0 418.0 L156.0 431.0 L158.9 434.0 L158.9 530.0Z" fill="#f9f87a" /><path d="M158.9 434.0 L159.9 434.1 L160.9 434.7 L161.9 434.9 L162.9 433.9 L163.9 433.8 L165.0 434.8 L166.0 434.8 L167.0 436.1 L168.0 436.1 L169.0 436.0 L170.0 436.0 L171.1 436.2 L172.1 436.6 L173.2 435.5 L174.2 436.3 L175.2 435.8 L176.3 437.5 L177.3 435.7 L178.4 437.5 L179.4 436.0 L180.5 437.4 L181.5 436.7 L182.6 437.2 L183.6 437.3 L184.7 438.6 L185.7 437.1 L186.7 437.5 L187.8 439.7 L188.8 439.1 L189.8 438.5 L190.9 440.8 L191.9 441.0 L192.9 439.5 L194.0 440.5 L195.0 441.0 L196.1 440.8 L197.1 441.7 L198.2 443.0 L199.3 442.5 L200.3 444.3 L201.4 443.4 L202.5 444.3 L203.6 446.3 L204.6 445.9 L205.7 446.7 L206.8 446.1 L207.8 446.0 L208.8 445.3 L209.9 444.6 L210.9 443.4 L212.0 444.0 L213.0 444.1 L214.0 444.3 L215.0 443.9 L216.0 442.9 L217.0 441.9 L218.0 441.8 L219.0 442.0 L220.0 443.1 L221.0 443.6 L222.0 442.8 L223.0 443.5 L224.0 444.2 L225.0 445.0 L226.0 445.6 L227.0 446.9 L228.0 446.8 L229.0 446.4 L230.0 448.0 L231.0 449.1 L232.0 448.6 L233.0 449.2 L234.0 449.0 L235.0 449.8 L236.0 450.2 L237.0 451.4 L238.0 450.3 L239.0 451.7 L240.0 452.0 L241.1 451.8 L242.1 453.5 L243.2 452.6 L244.3 453.7 L245.4 454.4 L246.4 455.6 L247.5 454.8 L248.6 456.3 L249.7 456.3 L250.7 457.0 L251.8 458.0" fill="none" stroke="url(#blg)" stroke-width="2.0" stroke-linejoin="round" /><path d="M251.8 530.0 L251.8 458.0 L258.0 450.0 L264.0 437.0 L268.7 431.0 L273.0 437.0 L279.0 455.0 L283.1 465.0 L283.1 530.0Z" fill="#f9f87a" /><path d="M283.1 465.0 L283.9 463.9 L284.6 466.8 L285.4 467.1 L286.2 468.4 L286.9 464.8 L287.7 465.4 L288.5 465.2 L289.2 466.0 L290.0 468.0 L290.8 469.2 L291.5 465.3 L292.2 467.4 L293.0 465.3 L293.8 465.5 L294.5 466.1 L295.2 468.3 L296.0 466.0 L296.8 467.2 L297.5 464.1 L298.2 466.2 L299.0 465.9 L299.8 470.7 L300.5 470.9 L301.2 471.3 L302.0 470.0 L302.8 471.1 L303.5 469.7 L304.2 470.1 L305.0 468.3 L305.8 464.2 L306.5 466.8 L307.2 463.8 L308.0 463.0 L308.7 464.2 L309.4 462.8 L310.1 461.7 L310.8 461.0 L311.6 461.1 L312.3 460.1 L313.0 458.7 L313.7 462.6 L314.4 460.4 L315.1 462.9 L315.8 464.7 L316.5 463.6 L317.2 463.5 L317.9 465.4 L318.6 462.4 L319.3 466.4 L320.0 466.0 L320.7 466.2 L321.4 465.1 L322.2 465.8 L322.9 468.3 L323.6 467.2 L324.3 469.0 L325.0 470.4 L325.8 469.6 L326.5 468.6 L327.2 471.3 L327.9 470.3 L328.6 470.8 L329.4 471.1 L330.1 472.7 L330.8 474.0 L331.5 471.7 L332.2 475.5 L332.9 477.6 L333.6 474.6 L334.3 476.9 L335.0 478.4 L335.8 473.4 L336.5 474.3 L337.2 478.6 L337.9 479.1 L338.6 478.2 L339.3 475.7 L340.0 478.0 L340.7 478.0 L341.5 481.3 L342.2 482.0 L342.9 482.0 L343.6 478.9 L344.4 483.4 L345.1 481.1 L345.8 483.7 L346.5 480.7 L347.3 486.3 L348.0 484.0 L348.7 484.9 L349.5 485.8 L350.2 483.0 L350.9 485.6 L351.6 485.6 L352.4 485.9 L353.1 484.8 L353.8 487.2 L354.6 485.1 L355.3 486.3 L356.0 485.4 L356.8 484.9 L357.5 488.3 L358.3 485.2 L359.0 486.2 L359.8 485.5 L360.5 489.3 L361.3 489.0 L362.0 489.0 L362.8 486.3 L363.7 480.2 L364.5 479.6 L365.4 476.1 L366.2 474.0 L366.9 471.2 L367.7 470.3 L368.4 475.9 L369.2 470.3 L369.9 471.0 L370.7 470.4 L371.4 472.0 L372.2 468.6 L372.9 470.5 L373.7 469.6 L374.4 470.0 L375.2 472.3 L375.9 467.6 L376.7 469.9 L377.4 471.2 L378.2 474.3 L379.0 471.9 L379.7 471.9 L380.5 473.4 L381.2 471.5 L382.0 473.0 L382.7 470.7 L383.4 474.1 L384.2 477.1 L384.9 476.6 L385.6 474.2 L386.4 477.3 L387.1 478.8 L387.8 475.8 L388.5 478.3 L389.2 477.5 L390.0 477.3 L390.7 479.4" fill="none" stroke="#f0ac84" stroke-width="1.6" stroke-linejoin="round" /><path d="M283.1 465.0 L284.2 463.9 L285.4 466.8 L286.6 467.1 L287.7 468.8 L288.9 466.6 L290.0 468.0 L291.2 466.6 L292.4 468.1 L293.6 467.4 L294.8 465.6 L296.0 466.0 L297.2 467.5 L298.4 467.2 L299.6 469.5 L300.8 467.7 L302.0 470.0 L303.2 467.5 L304.4 468.8 L305.6 465.2 L306.8 463.4 L308.0 463.0 L309.3 463.7 L310.6 462.5 L311.8 460.0 L313.1 461.1 L314.4 460.4 L315.5 462.2 L316.6 461.3 L317.8 464.4 L318.9 463.4 L320.0 466.0 L321.2 466.2 L322.4 466.1 L323.6 467.5 L324.8 471.5 L326.0 470.1 L327.2 473.3 L328.4 472.0 L329.6 473.5 L330.8 474.0 L331.9 476.0 L333.1 475.7 L334.2 473.9 L335.4 476.4 L336.6 477.0 L337.7 475.7 L338.9 475.9 L340.0 478.0 L341.1 480.4 L342.3 479.8 L343.4 479.3 L344.6 481.2 L345.7 481.2 L346.9 484.3 L348.0 484.0 L349.2 484.4 L350.4 483.2 L351.6 486.4 L352.9 483.9 L354.1 485.0 L355.3 486.3 L356.4 484.9 L357.5 488.2 L358.6 486.1 L359.8 488.2 L360.9 486.9 L362.0 489.0 L363.4 483.9 L364.8 479.7 L366.2 474.0 L367.4 473.6 L368.5 472.7 L369.7 472.2 L370.9 471.5 L372.1 471.5 L373.2 469.0 L374.4 470.0 L375.7 470.4 L376.9 469.9 L378.2 473.0 L379.5 473.8 L380.7 470.8 L382.0 473.0 L383.2 472.5 L384.5 475.6 L385.7 476.0 L387.0 474.7 L388.2 478.4 L389.5 480.3 L390.7 479.4" fill="none" stroke="#f0ac84" stroke-width="1.6" stroke-linejoin="round" /><line x1="146.6" y1="364" x2="146.6" y2="382" stroke="#1e6e3a" stroke-width="1"/><line x1="146.6" y1="382" x2="146.6" y2="530" stroke="#98ac58" stroke-width="1.3"/><line x1="268.3" y1="364" x2="268.3" y2="432" stroke="#1e5e3a" stroke-width="1"/><line x1="268.3" y1="432" x2="268.3" y2="530" stroke="#5a7a48" stroke-width="1.1"/><text x="0" y="0" transform="translate(150.2 378) rotate(-90)" font-size="5.6" font-weight="bold" text-anchor="start" fill="#14952e" textLength="30" lengthAdjust="spacingAndGlyphs">Peak 0</text><text x="0" y="0" transform="translate(271.90000000000003 395) rotate(-90)" font-size="5.6" font-weight="bold" text-anchor="middle" fill="#14952e" textLength="60" lengthAdjust="spacingAndGlyphs">Peak 1 (Multiplet)</text><line x1="229.2" y1="445.4" x2="229.2" y2="530" stroke="#23505a" stroke-width="1"/><text x="234.9" y="432" font-size="6.2" text-anchor="middle" fill="#2a5a9a" textLength="26" lengthAdjust="spacingAndGlyphs">(546, 159)</text><line x1="41.4" y1="380" x2="392.5" y2="380" stroke="#0a5a40" stroke-width="1.3"/><line x1="392.5" y1="380" x2="392.5" y2="532" stroke="#b8dccd" stroke-opacity="0.6" stroke-width="1"/><line x1="40.8" y1="380" x2="40.8" y2="532" stroke="#3f6d60" stroke-width="1.4"/><line x1="42.199999999999996" y1="381" x2="42.199999999999996" y2="532" stroke="#cfe6dc" stroke-opacity="0.55" stroke-width="1.2"/><line x1="41.4" y1="532" x2="392.5" y2="532" stroke="#3f6d60" stroke-width="1.3"/><text x="39.1" y="384.3" font-size="6.4" font-weight="bold" text-anchor="end" fill="#13261f" textLength="14.9" lengthAdjust="spacingAndGlyphs">10000</text><text x="39.1" y="421.0" font-size="6.4" font-weight="bold" text-anchor="end" fill="#13261f" textLength="12.0" lengthAdjust="spacingAndGlyphs">1000</text><text x="39.1" y="457.3" font-size="6.4" font-weight="bold" text-anchor="end" fill="#13261f" textLength="9.0" lengthAdjust="spacingAndGlyphs">100</text><text x="39.1" y="493.2" font-size="6.4" font-weight="bold" text-anchor="end" fill="#13261f" textLength="6.0" lengthAdjust="spacingAndGlyphs">10</text><text x="39.1" y="528.8" font-size="6.4" font-weight="bold" text-anchor="end" fill="#13261f" textLength="3.0" lengthAdjust="spacingAndGlyphs">1</text><line x1="41.4" y1="532" x2="41.4" y2="529" stroke="#3f6d60" stroke-width="0.8"/><text x="41.4" y="540.6" font-size="6.4" font-weight="bold" text-anchor="middle" fill="#13261f" textLength="3.0" lengthAdjust="spacingAndGlyphs">0</text><line x1="110.4" y1="532" x2="110.4" y2="529" stroke="#3f6d60" stroke-width="0.8"/><text x="110.4" y="540.6" font-size="6.4" font-weight="bold" text-anchor="middle" fill="#13261f" textLength="16.4" lengthAdjust="spacingAndGlyphs">200.00</text><line x1="179" y1="532" x2="179" y2="529" stroke="#3f6d60" stroke-width="0.8"/><text x="179" y="540.6" font-size="6.4" font-weight="bold" text-anchor="middle" fill="#13261f" textLength="16.4" lengthAdjust="spacingAndGlyphs">400.00</text><line x1="248" y1="532" x2="248" y2="529" stroke="#3f6d60" stroke-width="0.8"/><text x="248" y="540.6" font-size="6.4" font-weight="bold" text-anchor="middle" fill="#13261f" textLength="16.4" lengthAdjust="spacingAndGlyphs">600.00</text><line x1="316.5" y1="532" x2="316.5" y2="529" stroke="#3f6d60" stroke-width="0.8"/><text x="316.5" y="540.6" font-size="6.4" font-weight="bold" text-anchor="middle" fill="#13261f" textLength="16.4" lengthAdjust="spacingAndGlyphs">800.00</text><line x1="385.5" y1="532" x2="385.5" y2="529" stroke="#3f6d60" stroke-width="0.8"/><text x="385.5" y="540.6" font-size="6.4" font-weight="bold" text-anchor="middle" fill="#13261f" textLength="19.4" lengthAdjust="spacingAndGlyphs">1000.00</text><text x="216" y="548.6" font-size="6.4" text-anchor="middle" fill="#13261f" textLength="20.5" lengthAdjust="spacingAndGlyphs">Channel</text><text x="0" y="0" transform="translate(18.5 459) rotate(-90)" font-size="6.4" text-anchor="middle" fill="#13261f" textLength="20.5" lengthAdjust="spacingAndGlyphs">Counts</text></svg><div style="position:absolute;left:416px;top:364.8px;width:383.5px;height:188.2px;background:linear-gradient(#07986f 0%,#0c9a72 3%,#28a886 19%,#50b89c 40%,#7ecab2 61%,#a6dacd 82%,#bee6dc 96%,#c4e9df 100%);border-right:1px solid #5d7d72;border-bottom:1.5px solid #4f6c63;"></div><svg style="position:absolute;left:416px;top:364.8px" width="383.5" height="188.2" viewBox="416 364.8 383.5 188.2" font-family="Liberation Sans"><line x1="443.8" y1="480.8" x2="793.6" y2="480.8" stroke="#1f6a50" stroke-opacity="0.11" stroke-width="0.6"/><line x1="443.8" y1="524.3" x2="793.6" y2="524.3" stroke="#1f6a50" stroke-opacity="0.11" stroke-width="0.6"/><line x1="509.2" y1="380.9" x2="509.2" y2="532" stroke="#1f6a50" stroke-opacity="0.11" stroke-width="0.6"/><line x1="579.7" y1="380.9" x2="579.7" y2="532" stroke="#1f6a50" stroke-opacity="0.11" stroke-width="0.6"/><line x1="650" y1="380.9" x2="650" y2="532" stroke="#1f6a50" stroke-opacity="0.11" stroke-width="0.6"/><line x1="720.5" y1="380.9" x2="720.5" y2="532" stroke="#1f6a50" stroke-opacity="0.11" stroke-width="0.6"/><path d="M444.7 530.0 L444.7 448.0 L446.0 432.0 L447.5 420.3 L449.0 416.0 L450.3 417.5 L451.7 424.4 L453.5 402.0 L455.8 381.4 L457.5 396.0 L459.4 417.5 L461.4 446.0 L462.8 445.0 L462.8 530.0Z" fill="#6c0a16" /><path d="M444.7 448.0 L446.0 432.0 L447.5 420.3 L449.0 416.0 L450.3 417.5 L451.7 424.4 L453.5 402.0 L455.8 381.4 L457.5 396.0 L459.4 417.5 L461.4 446.0 L462.8 445.0" fill="none" stroke="#c0d460" stroke-width="0.9" stroke-linejoin="round" /><path d="M462.8 445.0 L463.7 445.0 L464.6 446.3 L465.5 446.7 L466.4 447.0 L467.3 447.1 L468.2 448.4 L469.1 448.9 L470.0 449.0 L470.8 449.2 L471.7 449.5 L472.5 449.3 L473.4 449.2 L474.2 449.9 L475.0 450.5 L475.9 450.0 L476.7 450.8 L477.6 450.7 L478.5 449.3 L479.4 448.8 L480.3 448.0 L481.2 448.8 L482.1 447.9 L483.0 447.0 L483.8 447.7 L484.7 447.5 L485.5 446.9 L486.4 447.5 L487.2 447.9 L488.1 447.6 L488.9 449.0 L489.8 448.3 L490.6 448.7 L491.4 448.6 L492.2 449.9 L493.1 449.3 L493.9 450.8 L494.7 450.5 L495.5 451.0 L496.4 451.0 L497.2 451.6 L498.0 452.0 L498.8 451.9 L499.6 451.9 L500.4 453.4 L501.2 452.8 L502.0 453.9 L502.8 453.4 L503.6 454.7 L504.4 454.9 L505.2 455.0 L506.0 455.3 L506.8 455.3 L507.6 455.8 L508.4 455.3 L509.2 456.1 L510.0 456.4 L510.8 457.0 L511.7 456.2 L512.5 457.4 L513.3 457.5 L514.2 456.9 L515.0 457.0 L515.8 457.3 L516.7 457.3 L517.5 458.3 L518.3 457.6 L519.2 457.2 L520.0 458.0 L520.8 457.5 L521.7 458.4 L522.5 458.9 L523.3 458.2 L524.2 458.3 L525.0 458.4 L525.8 458.7 L526.7 458.1 L527.5 458.7 L528.3 458.6 L529.2 458.8 L530.0 458.2 L530.8 458.3 L531.7 458.6 L532.5 459.4 L533.3 458.7 L534.2 459.1 L535.0 459.0 L535.8 458.6 L536.7 458.3 L537.5 458.1 L538.3 459.1 L539.2 459.0 L540.0 458.3 L540.8 458.7 L541.7 458.6 L542.5 458.8 L543.3 458.8 L544.2 458.0 L545.0 458.0 L545.8 458.8 L546.7 458.9 L547.5 458.5 L548.4 459.0 L549.2 458.6 L550.0 458.6 L550.9 458.5 L551.7 459.0 L552.6 460.8 L553.5 461.1 L554.4 462.3 L555.3 464.6 L556.2 465.8 L557.1 466.7 L558.0 468.0 L558.8 469.3 L559.7 469.1 L560.5 470.2 L561.3 471.1 L562.2 472.2 L563.0 472.7 L563.8 473.4 L564.7 474.6 L565.5 475.7 L566.3 476.6 L567.2 477.1 L568.0 477.1 L568.8 477.1 L569.7 477.2 L570.5 478.5 L571.3 478.3 L572.2 479.0 L573.0 479.0 L573.8 478.5 L574.7 478.9 L575.5 480.0 L576.3 480.1 L577.2 480.4 L578.0 480.1 L578.9 480.0 L579.7 480.4 L580.5 481.0 L581.4 480.4 L582.2 480.8 L583.1 480.8 L583.9 480.4 L584.8 481.0 L585.6 479.9 L586.5 480.8 L587.3 481.1 L588.2 479.7 L589.0 480.4 L589.9 480.4 L590.7 480.7 L591.6 480.2 L592.4 479.7 L593.3 480.0 L594.2 478.5 L595.1 478.0 L596.0 476.0" fill="none" stroke="#e9c6ab" stroke-width="1.7" stroke-linejoin="round" /><path d="M596.0 530.0 L596.0 476.0 L596.5 474.2 L597.0 472.3 L597.5 470.3 L598.0 468.2 L598.5 466.0 L599.0 463.8 L599.5 461.5 L600.0 459.2 L600.5 456.8 L601.0 454.4 L601.5 452.0 L602.0 449.6 L602.5 447.1 L603.0 444.7 L603.5 442.4 L604.0 440.0 L604.5 437.8 L605.0 435.6 L605.5 433.5 L606.0 431.5 L606.5 429.7 L607.0 428.0 L607.5 426.4 L608.0 425.0 L608.5 423.7 L609.0 422.7 L609.5 421.8 L610.0 421.1 L610.5 420.6 L611.0 420.4 L611.5 420.3 L612.0 420.5 L612.5 421.0 L613.0 421.8 L613.5 422.8 L614.0 424.2 L614.5 425.7 L615.0 427.5 L615.5 429.5 L616.0 431.7 L616.5 434.1 L617.0 436.6 L617.5 439.2 L618.0 442.0 L618.5 444.8 L619.0 447.6 L619.5 450.5 L620.0 453.4 L620.5 456.2 L621.0 459.1 L621.5 461.8 L622.0 464.5 L622.5 467.1 L623.0 469.6 L623.5 472.0 L624.0 474.3 L624.4 530.0Z" fill="#16a078" /><path d="M596.0 476.0 L596.5 474.2 L597.0 472.3 L597.5 470.3 L598.0 468.2 L598.5 466.0 L599.0 463.8 L599.5 461.5 L600.0 459.2 L600.5 456.8 L601.0 454.4 L601.5 452.0 L602.0 449.6 L602.5 447.1 L603.0 444.7 L603.5 442.4 L604.0 440.0 L604.5 437.8 L605.0 435.6 L605.5 433.5 L606.0 431.5 L606.5 429.7 L607.0 428.0 L607.5 426.4 L608.0 425.0 L608.5 423.7 L609.0 422.7 L609.5 421.8 L610.0 421.1 L610.5 420.6 L611.0 420.4 L611.5 420.3 L612.0 420.5 L612.5 421.0 L613.0 421.8 L613.5 422.8 L614.0 424.2 L614.5 425.7 L615.0 427.5 L615.5 429.5 L616.0 431.7 L616.5 434.1 L617.0 436.6 L617.5 439.2 L618.0 442.0 L618.5 444.8 L619.0 447.6 L619.5 450.5 L620.0 453.4 L620.5 456.2 L621.0 459.1 L621.5 461.8 L622.0 464.5 L622.5 467.1 L623.0 469.6 L623.5 472.0 L624.0 474.3" fill="none" stroke="#b8f066" stroke-width="1.3" stroke-linejoin="round" /><path d="M624.4 480.0 L625.2 480.6 L626.1 479.4 L626.9 479.1 L627.8 480.4 L628.6 479.2 L629.4 479.1 L630.3 479.7 L631.1 479.3 L632.0 479.9 L632.8 479.0 L633.6 479.9 L634.5 478.9 L635.3 479.3 L636.2 479.7 L637.0 479.0 L637.8 479.1 L638.6 479.3 L639.4 478.9 L640.2 477.9 L641.1 478.9 L641.9 478.4 L642.7 477.9 L643.5 477.6 L644.3 478.4 L645.1 477.9 L645.9 478.2 L646.8 477.9 L647.6 478.0 L648.4 477.3 L649.2 477.4 L650.0 477.0 L650.8 477.1 L651.7 476.5 L652.5 477.4 L653.3 476.4 L654.2 477.0 L655.0 477.1 L655.8 476.6 L656.7 475.8 L657.5 476.7 L658.3 476.4 L659.2 475.6 L660.0 476.0 L660.8 475.3 L661.6 475.9 L662.4 475.1 L663.2 476.3 L664.0 475.7 L664.8 475.6 L665.6 475.4 L666.4 475.7 L667.2 476.0 L668.0 475.1 L668.8 475.1 L669.6 475.3 L670.4 474.8 L671.2 475.2 L672.0 475.0 L672.8 475.5 L673.7 475.9 L674.5 476.7 L675.4 477.0 L676.2 476.8 L677.1 478.6 L677.9 478.2 L678.8 478.8 L679.6 479.2 L680.5 480.4 L681.3 481.0 L682.2 480.8 L683.0 481.3 L683.8 481.6 L684.6 481.5 L685.5 483.1 L686.3 482.5 L687.1 483.4 L687.9 483.5 L688.8 483.9 L689.6 484.3 L690.4 484.5 L691.2 484.7 L692.1 485.8 L692.9 486.6 L693.7 486.8 L694.5 486.6 L695.4 487.7 L696.2 487.2 L697.0 488.2 L697.8 488.3 L698.7 489.1 L699.5 489.4 L700.4 489.0 L701.2 489.8 L702.1 489.5 L702.9 489.7 L703.8 490.0 L704.6 490.8 L705.5 490.7 L706.3 490.5 L707.2 491.1 L708.0 491.0 L708.8 491.5 L709.6 491.3 L710.4 492.2 L711.3 492.5 L712.1 492.4 L712.9 493.2 L713.7 492.1 L714.5 493.1 L715.3 493.5 L716.1 493.3 L717.0 493.4 L717.8 494.4 L718.6 494.3 L719.4 494.6" fill="none" stroke="#e9c6ab" stroke-width="1.7" stroke-linejoin="round" /><path d="M718.8 530.0 L718.8 495.0 L719.3 493.8 L719.8 492.6 L720.3 491.3 L720.8 489.9 L721.3 488.5 L721.8 487.1 L722.3 485.6 L722.8 484.2 L723.3 482.6 L723.8 481.1 L724.3 479.5 L724.8 477.9 L725.3 476.3 L725.8 474.7 L726.3 473.1 L726.8 471.5 L727.3 470.0 L727.8 468.4 L728.3 466.9 L728.8 465.4 L729.3 464.0 L729.8 462.6 L730.3 461.3 L730.8 460.1 L731.3 458.9 L731.8 457.8 L732.3 456.8 L732.8 455.8 L733.3 455.0 L733.8 454.3 L734.3 453.6 L734.8 453.1 L735.3 452.7 L735.8 452.4 L736.3 452.3 L736.8 452.2 L737.3 452.3 L737.8 452.5 L738.3 452.9 L738.8 453.4 L739.3 454.0 L739.8 454.8 L740.3 455.7 L740.8 456.8 L741.3 458.0 L741.8 459.3 L742.3 460.7 L742.8 462.2 L743.3 463.8 L743.8 465.6 L744.3 467.4 L744.8 469.3 L745.3 471.2 L745.8 473.2 L746.3 475.3 L746.8 477.4 L747.3 479.6 L747.8 481.8 L748.3 484.0 L748.8 486.2 L749.3 488.4 L749.8 490.7 L750.3 492.9 L750.8 495.1 L751.3 497.3 L751.8 499.5 L752.3 501.6 L752.8 503.7 L753.3 505.8 L753.8 507.8 L754.3 509.7 L754.8 511.6 L755.3 513.5 L755.8 515.3 L756.3 517.0 L756.8 518.7 L757.3 518.7 L757.8 517.2 L758.3 515.7 L758.8 514.1 L759.3 512.5 L759.8 510.8 L760.3 509.1 L760.8 507.3 L761.3 505.5 L761.8 503.6 L762.3 501.7 L762.8 499.8 L763.3 497.9 L763.8 495.9 L764.3 494.0 L764.8 492.0 L765.3 490.0 L765.8 488.0 L766.3 486.1 L766.8 484.1 L767.3 482.2 L767.8 480.3 L768.3 478.5 L768.8 476.7 L769.3 474.9 L769.8 473.2 L770.3 471.6 L770.8 470.1 L771.3 468.6 L771.8 467.2 L772.3 465.9 L772.8 464.7 L773.3 463.6 L773.8 462.6 L774.3 461.8 L774.8 461.0 L775.3 460.3 L775.8 459.8 L776.3 459.4 L776.8 459.2 L777.3 459.0 L777.8 459.0 L778.3 459.2 L778.8 459.7 L779.3 460.4 L779.8 461.3 L780.3 462.4 L780.8 463.7 L781.3 465.3 L781.8 467.0 L782.3 468.9 L782.8 471.0 L783.3 473.3 L783.8 475.6 L784.3 478.1 L784.8 480.7 L785.3 483.4 L785.8 486.2 L786.3 489.0 L786.8 491.9 L787.3 494.8 L787.8 497.7 L788.3 500.6 L788.8 503.5 L789.3 506.3 L789.8 509.1 L790.3 511.9 L790.8 514.5 L791.3 517.2 L791.8 519.7 L792.3 522.1 L792.8 524.5 L793.3 526.8 L793.7 530.0Z" fill="#16a078" /><path d="M718.8 495.0 L719.3 493.8 L719.8 492.6 L720.3 491.3 L720.8 489.9 L721.3 488.5 L721.8 487.1 L722.3 485.6 L722.8 484.2 L723.3 482.6 L723.8 481.1 L724.3 479.5 L724.8 477.9 L725.3 476.3 L725.8 474.7 L726.3 473.1 L726.8 471.5 L727.3 470.0 L727.8 468.4 L728.3 466.9 L728.8 465.4 L729.3 464.0 L729.8 462.6 L730.3 461.3 L730.8 460.1 L731.3 458.9 L731.8 457.8 L732.3 456.8 L732.8 455.8 L733.3 455.0 L733.8 454.3 L734.3 453.6 L734.8 453.1 L735.3 452.7 L735.8 452.4 L736.3 452.3 L736.8 452.2 L737.3 452.3 L737.8 452.5 L738.3 452.9 L738.8 453.4 L739.3 454.0 L739.8 454.8 L740.3 455.7 L740.8 456.8 L741.3 458.0 L741.8 459.3 L742.3 460.7 L742.8 462.2 L743.3 463.8 L743.8 465.6 L744.3 467.4 L744.8 469.3 L745.3 471.2 L745.8 473.2 L746.3 475.3 L746.8 477.4 L747.3 479.6 L747.8 481.8 L748.3 484.0 L748.8 486.2 L749.3 488.4 L749.8 490.7 L750.3 492.9 L750.8 495.1 L751.3 497.3 L751.8 499.5 L752.3 501.6 L752.8 503.7 L753.3 505.8 L753.8 507.8 L754.3 509.7 L754.8 511.6 L755.3 513.5 L755.8 515.3 L756.3 517.0 L756.8 518.7 L757.3 518.7 L757.8 517.2 L758.3 515.7 L758.8 514.1 L759.3 512.5 L759.8 510.8 L760.3 509.1 L760.8 507.3 L761.3 505.5 L761.8 503.6 L762.3 501.7 L762.8 499.8 L763.3 497.9 L763.8 495.9 L764.3 494.0 L764.8 492.0 L765.3 490.0 L765.8 488.0 L766.3 486.1 L766.8 484.1 L767.3 482.2 L767.8 480.3 L768.3 478.5 L768.8 476.7 L769.3 474.9 L769.8 473.2 L770.3 471.6 L770.8 470.1 L771.3 468.6 L771.8 467.2 L772.3 465.9 L772.8 464.7 L773.3 463.6 L773.8 462.6 L774.3 461.8 L774.8 461.0 L775.3 460.3 L775.8 459.8 L776.3 459.4 L776.8 459.2 L777.3 459.0 L777.8 459.0 L778.3 459.2 L778.8 459.7 L779.3 460.4 L779.8 461.3 L780.3 462.4 L780.8 463.7 L781.3 465.3 L781.8 467.0 L782.3 468.9 L782.8 471.0 L783.3 473.3 L783.8 475.6 L784.3 478.1 L784.8 480.7 L785.3 483.4 L785.8 486.2 L786.3 489.0 L786.8 491.9 L787.3 494.8 L787.8 497.7 L788.3 500.6 L788.8 503.5 L789.3 506.3 L789.8 509.1 L790.3 511.9 L790.8 514.5 L791.3 517.2 L791.8 519.7 L792.3 522.1 L792.8 524.5 L793.3 526.8" fill="none" stroke="#b8f066" stroke-width="1.3" stroke-linejoin="round" /><path d="M444.7 463.4 L450.0 461.0 L456.0 455.0 L462.8 446.7" fill="none" stroke="#5a8ad8" stroke-width="1.0" stroke-linejoin="round" /><path d="M596.0 476.0 L624.4 476.0" fill="none" stroke="#5a9ad8" stroke-width="1.0" stroke-linejoin="round" /><path d="M718.8 495.0 L730.4 500.7 L744.4 513.2 L756.8 521.5 L777.6 524.3 L793.7 528.5" fill="none" stroke="#5a9ad8" stroke-width="1.1" stroke-linejoin="round" /><line x1="449.7" y1="410" x2="449.7" y2="530" stroke="#9a7cd0" stroke-width="0.9"/><line x1="456.6" y1="376" x2="456.6" y2="530" stroke="#9a7cd0" stroke-width="0.9"/><line x1="611.4" y1="415" x2="611.4" y2="530" stroke="#9a7cd0" stroke-width="0.9"/><line x1="736.8" y1="447" x2="736.8" y2="530" stroke="#9a7cd0" stroke-width="0.9"/><line x1="777.6" y1="454" x2="777.6" y2="530" stroke="#9a7cd0" stroke-width="0.9"/><text x="0" y="0" transform="translate(452.3 395) rotate(-90)" font-size="5.6" font-weight="bold" text-anchor="middle" fill="#a84ddc" textLength="25" lengthAdjust="spacingAndGlyphs">Peak 0 PS</text><text x="0" y="0" transform="translate(460.1 376) rotate(-90)" font-size="5.6" font-weight="bold" text-anchor="start" fill="#a84ddc" textLength="22" lengthAdjust="spacingAndGlyphs">Peak 1</text><text x="0" y="0" transform="translate(614.0 399.5) rotate(-90)" font-size="5.6" font-weight="bold" text-anchor="middle" fill="#a84ddc" textLength="28" lengthAdjust="spacingAndGlyphs">Peak 2 PS</text><text x="0" y="0" transform="translate(739.4 431.5) rotate(-90)" font-size="5.6" font-weight="bold" text-anchor="middle" fill="#a84ddc" textLength="28" lengthAdjust="spacingAndGlyphs">Peak 3 PS</text><text x="0" y="0" transform="translate(780.2 438) rotate(-90)" font-size="5.6" font-weight="bold" text-anchor="middle" fill="#a84ddc" textLength="28" lengthAdjust="spacingAndGlyphs">Peak 4 PS</text><line x1="706.9" y1="488" x2="706.9" y2="530" stroke="#2a5f6a" stroke-width="1"/><text x="712.5" y="475.2" font-size="6.2" text-anchor="middle" fill="#2a5a9a" textLength="26" lengthAdjust="spacingAndGlyphs">(782, 609)</text><line x1="443.8" y1="380.9" x2="793.6" y2="380.9" stroke="#0a5a40" stroke-width="1.3"/><line x1="793.6" y1="380.9" x2="793.6" y2="532" stroke="#b8dccd" stroke-opacity="0.6" stroke-width="1"/><line x1="443.2" y1="380.9" x2="443.2" y2="532" stroke="#3f6d60" stroke-width="1.4"/><line x1="444.6" y1="381.9" x2="444.6" y2="532" stroke="#cfe6dc" stroke-opacity="0.55" stroke-width="1.2"/><line x1="443.8" y1="532" x2="793.6" y2="532" stroke="#3f6d60" stroke-width="1.3"/><text x="441.5" y="402.6" font-size="6.4" font-weight="bold" text-anchor="end" fill="#13261f" textLength="14.9" lengthAdjust="spacingAndGlyphs">20000</text><text x="441.5" y="422.6" font-size="6.4" font-weight="bold" text-anchor="end" fill="#13261f" textLength="14.9" lengthAdjust="spacingAndGlyphs">10000</text><text x="441.5" y="464.8" font-size="6.4" font-weight="bold" text-anchor="end" fill="#13261f" textLength="12.0" lengthAdjust="spacingAndGlyphs">2000</text><text x="441.5" y="483.1" font-size="6.4" font-weight="bold" text-anchor="end" fill="#13261f" textLength="12.0" lengthAdjust="spacingAndGlyphs">1000</text><text x="441.5" y="526.5999999999999" font-size="6.4" font-weight="bold" text-anchor="end" fill="#13261f" textLength="9.0" lengthAdjust="spacingAndGlyphs">200</text><line x1="509.2" y1="532" x2="509.2" y2="529" stroke="#3f6d60" stroke-width="0.8"/><text x="509.2" y="540.6" font-size="6.4" font-weight="bold" text-anchor="middle" fill="#13261f" textLength="9.0" lengthAdjust="spacingAndGlyphs">200</text><line x1="579.7" y1="532" x2="579.7" y2="529" stroke="#3f6d60" stroke-width="0.8"/><text x="579.7" y="540.6" font-size="6.4" font-weight="bold" text-anchor="middle" fill="#13261f" textLength="16.4" lengthAdjust="spacingAndGlyphs">400.00</text><line x1="650" y1="532" x2="650" y2="529" stroke="#3f6d60" stroke-width="0.8"/><text x="650" y="540.6" font-size="6.4" font-weight="bold" text-anchor="middle" fill="#13261f" textLength="16.4" lengthAdjust="spacingAndGlyphs">600.00</text><line x1="720.5" y1="532" x2="720.5" y2="529" stroke="#3f6d60" stroke-width="0.8"/><text x="720.5" y="540.6" font-size="6.4" font-weight="bold" text-anchor="middle" fill="#13261f" textLength="16.4" lengthAdjust="spacingAndGlyphs">800.00</text><line x1="790.5" y1="532" x2="790.5" y2="529" stroke="#3f6d60" stroke-width="0.8"/><text x="790.5" y="540.6" font-size="6.4" font-weight="bold" text-anchor="middle" fill="#13261f" textLength="19.4" lengthAdjust="spacingAndGlyphs">1000.00</text><text x="619" y="548.6" font-size="6.4" text-anchor="middle" fill="#13261f" textLength="20.5" lengthAdjust="spacingAndGlyphs">Channel</text><text x="0" y="0" transform="translate(421 458) rotate(-90)" font-size="6.4" text-anchor="middle" fill="#13261f" textLength="20.5" lengthAdjust="spacingAndGlyphs">Counts</text></svg><div style="position:absolute;left:13px;top:265px;width:385px;height:65px;background:#fff;"></div><div style="position:absolute;left:13px;top:264px;width:385px;height:2.5px;background:#e4eaf0;"></div><div style="position:absolute;left:389.3px;top:266px;width:9px;height:63px;background:linear-gradient(to right,#ececec,#f6f6f6);"></div><div style="position:absolute;left:392.6px;top:271px;width:2.4px;height:2.4px;background:#777;border-radius:50%;"></div><div style="position:absolute;left:392.6px;top:321px;width:2.4px;height:2.4px;background:#777;border-radius:50%;"></div><div style="position:absolute;left:389.8px;top:294px;width:8.5px;height:10px;background:linear-gradient(to right,#f8f8f8,#dedede);border:1px solid #9a9a9a;border-radius:1.5px;"></div><div style="position:absolute;left:100.8px;top:267.4px;width:202.6px;height:11.8px;background:#7f7f7f;"></div><div style="position:absolute;left:164.7px;top:268.9px;font-size:8px;line-height:9.6px;color:#f0f0f0;white-space:nowrap;font-weight:bold;transform:translateX(-50%) scaleX(0.920);transform-origin:center center;">[chn]</div><div style="position:absolute;left:158.7px;top:266.5px;width:12px;height:1.5px;background:#b8b8b8;"></div><div style="position:absolute;left:215.2px;top:268.9px;font-size:8px;line-height:9.6px;color:#f0f0f0;white-space:nowrap;font-weight:bold;transform:translateX(-50%) scaleX(0.920);transform-origin:center center;">[keV]</div><div style="position:absolute;left:209.2px;top:266.5px;width:12px;height:1.5px;background:#b8b8b8;"></div><div style="position:absolute;left:272px;top:268.9px;font-size:8px;line-height:9.6px;color:#f0f0f0;white-space:nowrap;font-weight:bold;transform:translateX(-50%) scaleX(0.920);transform-origin:center center;">[aunits]</div><div style="position:absolute;left:266px;top:266.5px;width:12px;height:1.5px;background:#b8b8b8;"></div><div style="position:absolute;left:100.8px;top:279.2px;width:202.6px;height:10.4px;border:1px solid #bdbdbd;border-top:none;"></div><div style="position:absolute;left:139.8px;top:279.2px;width:1.2px;height:10.4px;background:#bdbdbd;"></div><div style="position:absolute;left:190px;top:279.2px;width:1.2px;height:10.4px;background:#bdbdbd;"></div><div style="position:absolute;left:240.3px;top:279.2px;width:1.2px;height:10.4px;background:#bdbdbd;"></div><div style="position:absolute;left:104.9px;top:279.0px;font-size:8px;line-height:9.6px;color:#333;white-space:nowrap;transform:scaleX(0.800);transform-origin:left center;">Peak 0 PS</div><div style="position:absolute;left:179.2px;top:279.0px;font-size:8px;line-height:9.6px;color:#333;white-space:nowrap;transform:translateX(-100%) scaleX(0.830);transform-origin:right center;">744.00</div><div style="position:absolute;left:230.4px;top:279.0px;font-size:8px;line-height:9.6px;color:#333;white-space:nowrap;transform:translateX(-100%) scaleX(0.830);transform-origin:right center;">238.37</div><div style="position:absolute;left:284.6px;top:279.0px;font-size:8px;line-height:9.6px;color:#333;white-space:nowrap;transform:translateX(-100%) scaleX(0.830);transform-origin:right center;">8.2</div><div style="position:absolute;left:100.8px;top:289.2px;width:202.6px;height:10.4px;border:1px solid #bdbdbd;border-top:none;"></div><div style="position:absolute;left:139.8px;top:289.2px;width:1.2px;height:10.4px;background:#bdbdbd;"></div><div style="position:absolute;left:190px;top:289.2px;width:1.2px;height:10.4px;background:#bdbdbd;"></div><div style="position:absolute;left:240.3px;top:289.2px;width:1.2px;height:10.4px;background:#bdbdbd;"></div><div style="position:absolute;left:104.9px;top:289.0px;font-size:8px;line-height:9.6px;color:#333;white-space:nowrap;transform:scaleX(0.800);transform-origin:left center;">Peak 1 PS</div><div style="position:absolute;left:179.2px;top:289.0px;font-size:8px;line-height:9.6px;color:#333;white-space:nowrap;transform:translateX(-100%) scaleX(0.830);transform-origin:right center;">920.00</div><div style="position:absolute;left:230.4px;top:289.0px;font-size:8px;line-height:9.6px;color:#333;white-space:nowrap;transform:translateX(-100%) scaleX(0.830);transform-origin:right center;">294.76</div><div style="position:absolute;left:284.6px;top:289.0px;font-size:8px;line-height:9.6px;color:#333;white-space:nowrap;transform:translateX(-100%) scaleX(0.830);transform-origin:right center;">6.2</div><div style="position:absolute;left:100.8px;top:299.2px;width:202.6px;height:10.4px;border:1px solid #bdbdbd;border-top:none;"></div><div style="position:absolute;left:139.8px;top:299.2px;width:1.2px;height:10.4px;background:#bdbdbd;"></div><div style="position:absolute;left:190px;top:299.2px;width:1.2px;height:10.4px;background:#bdbdbd;"></div><div style="position:absolute;left:240.3px;top:299.2px;width:1.2px;height:10.4px;background:#bdbdbd;"></div><div style="position:absolute;left:104.9px;top:299.0px;font-size:8px;line-height:9.6px;color:#333;white-space:nowrap;transform:scaleX(0.800);transform-origin:left center;">Peak 2 PS</div><div style="position:absolute;left:179.2px;top:299.0px;font-size:8px;line-height:9.6px;color:#333;white-space:nowrap;transform:translateX(-100%) scaleX(0.830);transform-origin:right center;">1098.00</div><div style="position:absolute;left:230.4px;top:299.0px;font-size:8px;line-height:9.6px;color:#333;white-space:nowrap;transform:translateX(-100%) scaleX(0.830);transform-origin:right center;">351.79</div><div style="position:absolute;left:284.6px;top:299.0px;font-size:8px;line-height:9.6px;color:#333;white-space:nowrap;transform:translateX(-100%) scaleX(0.830);transform-origin:right center;">9.0</div><div style="position:absolute;left:100.8px;top:309.2px;width:202.6px;height:10.4px;border:1px solid #bdbdbd;border-top:none;"></div><div style="position:absolute;left:139.8px;top:309.2px;width:1.2px;height:10.4px;background:#bdbdbd;"></div><div style="position:absolute;left:190px;top:309.2px;width:1.2px;height:10.4px;background:#bdbdbd;"></div><div style="position:absolute;left:240.3px;top:309.2px;width:1.2px;height:10.4px;background:#bdbdbd;"></div><div style="position:absolute;left:104.9px;top:309.0px;font-size:8px;line-height:9.6px;color:#333;white-space:nowrap;transform:scaleX(0.800);transform-origin:left center;">Peak 3 PS</div><div style="position:absolute;left:179.2px;top:309.0px;font-size:8px;line-height:9.6px;color:#333;white-space:nowrap;transform:translateX(-100%) scaleX(0.830);transform-origin:right center;">1597.00</div><div style="position:absolute;left:230.4px;top:309.0px;font-size:8px;line-height:9.6px;color:#333;white-space:nowrap;transform:translateX(-100%) scaleX(0.830);transform-origin:right center;">511.66</div><div style="position:absolute;left:284.6px;top:309.0px;font-size:8px;line-height:9.6px;color:#333;white-space:nowrap;transform:translateX(-100%) scaleX(0.830);transform-origin:right center;">5.0</div><div style="position:absolute;left:100.8px;top:319.2px;width:202.6px;height:10.4px;border:1px solid #bdbdbd;border-top:none;"></div><div style="position:absolute;left:139.8px;top:319.2px;width:1.2px;height:10.4px;background:#bdbdbd;"></div><div style="position:absolute;left:190px;top:319.2px;width:1.2px;height:10.4px;background:#bdbdbd;"></div><div style="position:absolute;left:240.3px;top:319.2px;width:1.2px;height:10.4px;background:#bdbdbd;"></div><div style="position:absolute;left:104.9px;top:319.0px;font-size:8px;line-height:9.6px;color:#333;white-space:nowrap;transform:scaleX(0.800);transform-origin:left center;">Peak 4 PS</div><div style="position:absolute;left:179.2px;top:319.0px;font-size:8px;line-height:9.6px;color:#333;white-space:nowrap;transform:translateX(-100%) scaleX(0.830);transform-origin:right center;">1820.00</div><div style="position:absolute;left:230.4px;top:319.0px;font-size:8px;line-height:9.6px;color:#333;white-space:nowrap;transform:translateX(-100%) scaleX(0.830);transform-origin:right center;">583.11</div><div style="position:absolute;left:284.6px;top:319.0px;font-size:8px;line-height:9.6px;color:#333;white-space:nowrap;transform:translateX(-100%) scaleX(0.830);transform-origin:right center;">6.2</div><div style="position:absolute;left:415.5px;top:267px;width:384.5px;height:62px;background:#fff;"></div><div style="position:absolute;left:790.5px;top:267px;width:9px;height:62px;background:linear-gradient(to right,#ececec,#f6f6f6);"></div><div style="position:absolute;left:793.8px;top:272px;width:2.4px;height:2.4px;background:#777;border-radius:50%;"></div><div style="position:absolute;left:793.8px;top:321px;width:2.4px;height:2.4px;background:#777;border-radius:50%;"></div><div style="position:absolute;left:791.0px;top:278px;width:8.5px;height:23px;background:linear-gradient(to right,#f8f8f8,#dedede);border:1px solid #9a9a9a;border-radius:1.5px;"></div><div style="position:absolute;left:418.8px;top:271.6px;font-size:10.4px;line-height:12.5px;color:#9a9a9a;white-space:nowrap;transform:scaleX(1.014);transform-origin:left center;">Peaks results report</div><div style="position:absolute;left:418.8px;top:292.8px;font-size:9.2px;line-height:11.0px;color:#1a1a1a;white-space:nowrap;font-weight:bold;transform:scaleX(0.981);transform-origin:left center;">Manual Peaks:</div><div style="position:absolute;left:13px;top:557px;width:385.5px;height:62.5px;background:#fff;"></div><div style="position:absolute;left:389.3px;top:557px;width:9px;height:62.5px;background:linear-gradient(to right,#ececec,#f6f6f6);"></div><div style="position:absolute;left:392.6px;top:562px;width:2.4px;height:2.4px;background:#777;border-radius:50%;"></div><div style="position:absolute;left:392.6px;top:611.5px;width:2.4px;height:2.4px;background:#777;border-radius:50%;"></div><div style="position:absolute;left:389.8px;top:567px;width:8.5px;height:22px;background:linear-gradient(to right,#f8f8f8,#dedede);border:1px solid #9a9a9a;border-radius:1.5px;"></div><div style="position:absolute;left:16.3px;top:561.3px;font-size:10.4px;line-height:12.5px;color:#9a9a9a;white-space:nowrap;transform:scaleX(1.014);transform-origin:left center;">Peaks results report</div><div style="position:absolute;left:16.3px;top:582.5px;font-size:9.2px;line-height:11.0px;color:#1a1a1a;white-space:nowrap;font-weight:bold;transform:scaleX(0.981);transform-origin:left center;">Manual Peaks:</div><div style="position:absolute;left:416px;top:557px;width:384px;height:62.5px;background:#fff;"></div><div style="position:absolute;left:416px;top:557px;width:200px;height:3px;overflow:hidden;"><div style="position:absolute;left:3px;top:-5.2px;font-size:8px;line-height:9.6px;color:#333;white-space:nowrap;transform:scaleX(0.78);transform-origin:left center;">No of Peaks position: 0</div></div><div style="position:absolute;left:790.5px;top:557px;width:9px;height:53px;background:linear-gradient(to right,#ececec,#f6f6f6);"></div><div style="position:absolute;left:793.8px;top:562px;width:2.4px;height:2.4px;background:#777;border-radius:50%;"></div><div style="position:absolute;left:793.8px;top:602px;width:2.4px;height:2.4px;background:#777;border-radius:50%;"></div><div style="position:absolute;left:791.0px;top:578px;width:8.5px;height:12px;background:linear-gradient(to right,#f8f8f8,#dedede);border:1px solid #9a9a9a;border-radius:1.5px;"></div><div style="position:absolute;left:418.8px;top:580px;width:371.6px;height:20px;background:#7f7f7f;"></div><div style="position:absolute;left:438.4px;top:581.1px;font-size:6.8px;line-height:8.2px;color:#f2f2f2;white-space:nowrap;font-weight:bold;transform:translateX(-50%);">Peak label</div><div style="position:absolute;left:492.4px;top:581.1px;font-size:6.8px;line-height:8.2px;color:#f2f2f2;white-space:nowrap;font-weight:bold;transform:translateX(-50%);">Peak position</div><div style="position:absolute;left:492.4px;top:590.4px;font-size:6.8px;line-height:8.2px;color:#f2f2f2;white-space:nowrap;font-weight:bold;transform:translateX(-50%);">[chn]</div><div style="position:absolute;left:551.9px;top:581.1px;font-size:6.8px;line-height:8.2px;color:#f2f2f2;white-space:nowrap;font-weight:bold;transform:translateX(-50%);">Peak position</div><div style="position:absolute;left:551.9px;top:590.4px;font-size:6.8px;line-height:8.2px;color:#f2f2f2;white-space:nowrap;font-weight:bold;transform:translateX(-50%);">[keV]</div><div style="position:absolute;left:599.0px;top:581.1px;font-size:6.8px;line-height:8.2px;color:#f2f2f2;white-space:nowrap;font-weight:bold;transform:translateX(-50%);">Peak FWHM</div><div style="position:absolute;left:599.0px;top:590.4px;font-size:6.8px;line-height:8.2px;color:#f2f2f2;white-space:nowrap;font-weight:bold;transform:translateX(-50%);">[chn]</div><div style="position:absolute;left:643.8px;top:581.1px;font-size:6.8px;line-height:8.2px;color:#f2f2f2;white-space:nowrap;font-weight:bold;transform:translateX(-50%);">Peak Height</div><div style="position:absolute;left:643.8px;top:590.4px;font-size:6.8px;line-height:8.2px;color:#f2f2f2;white-space:nowrap;font-weight:bold;transform:translateX(-50%);">[cnts]</div><div style="position:absolute;left:701.3px;top:581.1px;font-size:6.8px;line-height:8.2px;color:#f2f2f2;white-space:nowrap;font-weight:bold;transform:translateX(-50%);">Peak Area</div><div style="position:absolute;left:701.3px;top:590.4px;font-size:6.8px;line-height:8.2px;color:#f2f2f2;white-space:nowrap;font-weight:bold;transform:translateX(-50%);">[cnts]</div><div style="position:absolute;left:763.2px;top:581.1px;font-size:6.8px;line-height:8.2px;color:#f2f2f2;white-space:nowrap;font-weight:bold;transform:translateX(-50%);">Peak Continuu</div><div style="position:absolute;left:763.2px;top:590.4px;font-size:6.8px;line-height:8.2px;color:#f2f2f2;white-space:nowrap;font-weight:bold;transform:translateX(-50%);">[cnts]</div><div style="position:absolute;left:418.8px;top:600px;width:371.6px;height:10.5px;border:1px solid #b8b8b8;border-top:none;"></div><div style="position:absolute;left:458px;top:600px;width:1px;height:10.5px;background:#b8b8b8;"></div><div style="position:absolute;left:526.8px;top:600px;width:1px;height:10.5px;background:#b8b8b8;"></div><div style="position:absolute;left:577px;top:600px;width:1px;height:10.5px;background:#b8b8b8;"></div><div style="position:absolute;left:621px;top:600px;width:1px;height:10.5px;background:#b8b8b8;"></div><div style="position:absolute;left:666.6px;top:600px;width:1px;height:10.5px;background:#b8b8b8;"></div><div style="position:absolute;left:736px;top:600px;width:1px;height:10.5px;background:#b8b8b8;"></div><div style="position:absolute;left:438.4px;top:600.6px;font-size:7.8px;line-height:9.4px;color:#222;white-space:nowrap;transform:translateX(-50%) scaleX(0.850);transform-origin:center center;">Peak 0 PS</div><div style="position:absolute;left:492.4px;top:600.6px;font-size:7.8px;line-height:9.4px;color:#222;white-space:nowrap;transform:translateX(-50%) scaleX(0.850);transform-origin:center center;">0.00 &#177; 0.00</div><div style="position:absolute;left:552px;top:600.6px;font-size:7.8px;line-height:9.4px;color:#222;white-space:nowrap;transform:translateX(-50%) scaleX(0.850);transform-origin:center center;">-</div><div style="position:absolute;left:611.5px;top:600.6px;font-size:7.8px;line-height:9.4px;color:#222;white-space:nowrap;transform:translateX(-100%) scaleX(0.850);transform-origin:right center;">0.00</div><div style="position:absolute;left:655.5px;top:600.6px;font-size:7.8px;line-height:9.4px;color:#222;white-space:nowrap;transform:translateX(-100%) scaleX(0.850);transform-origin:right center;">0</div><div style="position:absolute;left:700.8px;top:600.6px;font-size:7.8px;line-height:9.4px;color:#222;white-space:nowrap;transform:translateX(-50%) scaleX(0.850);transform-origin:center center;">0.0 &#177; 0.0</div><div style="position:absolute;left:768.8px;top:600.6px;font-size:7.8px;line-height:9.4px;color:#222;white-space:nowrap;transform:translateX(-50%) scaleX(0.850);transform-origin:center center;">0 &#177; 0</div><div style="position:absolute;left:416px;top:610.5px;width:374.5px;height:8px;background:#eaeaea;"></div><div style="position:absolute;left:426px;top:611.3px;width:306px;height:6.8px;background:linear-gradient(#f0f0f0,#d8d8d8 60%,#c6c6c6);border:1px solid #a4a4a4;border-radius:2px;"></div><div style="position:absolute;left:420px;top:612.4px;font-size:3.5px;line-height:4.2px;color:#555;white-space:nowrap;">&#9664;</div><div style="position:absolute;left:785px;top:612.4px;font-size:3.5px;line-height:4.2px;color:#555;white-space:nowrap;">&#9654;</div><div style="position:absolute;left:809px;top:50px;width:215px;height:580px;background:#f0f0f0;"></div><div style="position:absolute;left:809px;top:50px;width:5px;height:580px;background:#f5f3f7;"></div><div style="position:absolute;left:811px;top:50px;width:213px;height:12.5px;background:linear-gradient(#e4e4e4,#d6d6d6 25%,#d8d8d8 80%,#cfcfcf);"></div><div style="position:absolute;left:813px;top:52.8px;font-size:7px;line-height:8.4px;color:#222;white-space:nowrap;transform:scaleX(0.819);transform-origin:left center;">Background_measurement-1,5x1,5LaBr3_detector.spe</div><svg style="position:absolute;left:1006px;top:53px" width="16" height="8" viewBox="0 0 16 8"><rect x="1.8" y="1" width="4" height="3.5" fill="none" stroke="#555" stroke-width="1"/><rect x="1" y="2.5" width="4.2" height="4.2" fill="#666" stroke="#444" stroke-width="0.6"/><path d="M10.3 1.8L14 5.8M14 1.8L10.3 5.8" stroke="#222" stroke-width="1.5"/></svg><div style="position:absolute;left:815px;top:68.3px;width:203px;height:13.4px;background:linear-gradient(#f5f5f5,#ebebeb);border:1px solid #dadada;border-bottom-color:#c2c2c2;border-right-color:#cacaca;border-radius:1px;"></div><div style="position:absolute;left:817px;top:70.9px;font-size:7px;line-height:8.4px;color:#222;white-space:nowrap;transform:scaleX(0.809);transform-origin:left center;">Roi</div><div style="position:absolute;left:815px;top:84.6px;width:203px;height:13.4px;background:linear-gradient(#f5f5f5,#ebebeb);border:1px solid #dadada;border-bottom-color:#c2c2c2;border-right-color:#cacaca;border-radius:1px;"></div><div style="position:absolute;left:817px;top:87.2px;font-size:7px;line-height:8.4px;color:#222;white-space:nowrap;transform:scaleX(0.798);transform-origin:left center;">Continuum</div><div style="position:absolute;left:815px;top:100.9px;width:203px;height:13.4px;background:linear-gradient(#f5f5f5,#ebebeb);border:1px solid #dadada;border-bottom-color:#c2c2c2;border-right-color:#cacaca;border-radius:1px;"></div><div style="position:absolute;left:817px;top:103.5px;font-size:7px;line-height:8.4px;color:#222;white-space:nowrap;transform:scaleX(0.802);transform-origin:left center;">Peak search</div><div style="position:absolute;left:815px;top:117.2px;width:203px;height:13.4px;background:linear-gradient(#f5f5f5,#ebebeb);border:1px solid #dadada;border-bottom-color:#c2c2c2;border-right-color:#cacaca;border-radius:1px;"></div><div style="position:absolute;left:817px;top:119.8px;font-size:7px;line-height:8.4px;color:#222;white-space:nowrap;transform:scaleX(0.771);transform-origin:left center;">Peaks limits</div><div style="position:absolute;left:815px;top:133.5px;width:203px;height:13.4px;background:linear-gradient(#f5f5f5,#ebebeb);border:1px solid #dadada;border-bottom-color:#c2c2c2;border-right-color:#cacaca;border-radius:1px;"></div><div style="position:absolute;left:817px;top:136.1px;font-size:7px;line-height:8.4px;color:#222;white-space:nowrap;transform:scaleX(0.876);transform-origin:left center;">Fitting</div><div style="position:absolute;left:815px;top:158.3px;font-size:7px;line-height:8.4px;color:#222;white-space:nowrap;transform:scaleX(0.832);transform-origin:left center;">Fitting method</div><div style="position:absolute;left:909px;top:156px;width:108.5px;height:11.5px;background:linear-gradient(#f8f8f8,#e6e6e6);border:1px solid #9a9a9a;border-radius:2px;"></div><div style="position:absolute;left:911px;top:157.8px;font-size:7px;line-height:8.4px;color:#222;white-space:nowrap;transform:scaleX(0.815);transform-origin:left center;">Non-linear least square</div><div style="position:absolute;left:1009px;top:158.8px;font-size:5px;line-height:6.0px;color:#222;white-space:nowrap;">&#9660;</div><div style="position:absolute;left:834.4px;top:180.6px;width:29.100000000000023px;height:10px;background:linear-gradient(#f6f6f6,#e2e2e2);border:1px solid #a6a6a6;border-radius:2px;"></div><div style="position:absolute;left:848.95px;top:181.7px;font-size:6.8px;line-height:8.2px;color:#222;white-space:nowrap;transform:translateX(-50%) scaleX(0.887);transform-origin:center center;">Do fitting</div><div style="position:absolute;left:886px;top:180.6px;width:62.60000000000002px;height:10px;background:linear-gradient(#f6f6f6,#e2e2e2);border:1px solid #a6a6a6;border-radius:2px;"></div><div style="position:absolute;left:917.3px;top:181.7px;font-size:6.8px;line-height:8.2px;color:#222;white-space:nowrap;transform:translateX(-50%) scaleX(0.886);transform-origin:center center;">Default fitting method</div><div style="position:absolute;left:970.7px;top:180.6px;width:26.5px;height:10px;background:linear-gradient(#f6f6f6,#e2e2e2);border:1px solid #a6a6a6;border-radius:2px;"></div><div style="position:absolute;left:983.95px;top:181.7px;font-size:6.8px;line-height:8.2px;color:#222;white-space:nowrap;transform:translateX(-50%) scaleX(0.952);transform-origin:center center;">Clear fit</div><div style="position:absolute;left:815.8px;top:598.3px;width:202px;height:11.2px;background:linear-gradient(#f4f4f4,#e9e9e9);border:1px solid #d2d2d2;border-bottom-color:#bdbdbd;"></div><div style="position:absolute;left:817.3px;top:599.8px;font-size:7px;line-height:8.4px;color:#222;white-space:nowrap;transform:scaleX(0.834);transform-origin:left center;">Quantification</div><div style="position:absolute;left:868px;top:614.8px;width:22px;height:9.5px;background:#f2f2f2;border:1px solid #cfcfcf;border-radius:2px;"></div><div style="position:absolute;left:879.0px;top:615.7px;font-size:6.5px;line-height:7.8px;color:#a8a8a8;white-space:nowrap;transform:translateX(-50%) scaleX(0.880);transform-origin:center center;">Cancel</div><div style="position:absolute;left:946px;top:614.8px;width:19.600000000000023px;height:9.5px;background:#f2f2f2;border:1px solid #cfcfcf;border-radius:2px;"></div><div style="position:absolute;left:955.8px;top:615.7px;font-size:6.5px;line-height:7.8px;color:#a8a8a8;white-space:nowrap;transform:translateX(-50%) scaleX(0.892);transform-origin:center center;">Apply</div><div style="position:absolute;left:0px;top:27px;width:4px;height:578px;background:#f6f6f6;"></div><div style="position:absolute;left:0px;top:79px;width:4px;height:1px;background:#c8c8c8;"></div><div style="position:absolute;left:0px;top:605px;width:4px;height:37px;background:linear-gradient(#c8d4ea,#3d5fa8 25%,#1e3c8e);"></div><div style="position:absolute;left:0px;top:630px;width:1024px;height:12px;background:#ececec;"></div><div style="position:absolute;left:849px;top:632.0px;font-size:7px;line-height:8.4px;color:#222;white-space:nowrap;transform:scaleX(0.876);transform-origin:left center;">ch=462 , E=794.448 keV, Y=128, Y= 0.1 cps  Total count rate:</div></body></html>
